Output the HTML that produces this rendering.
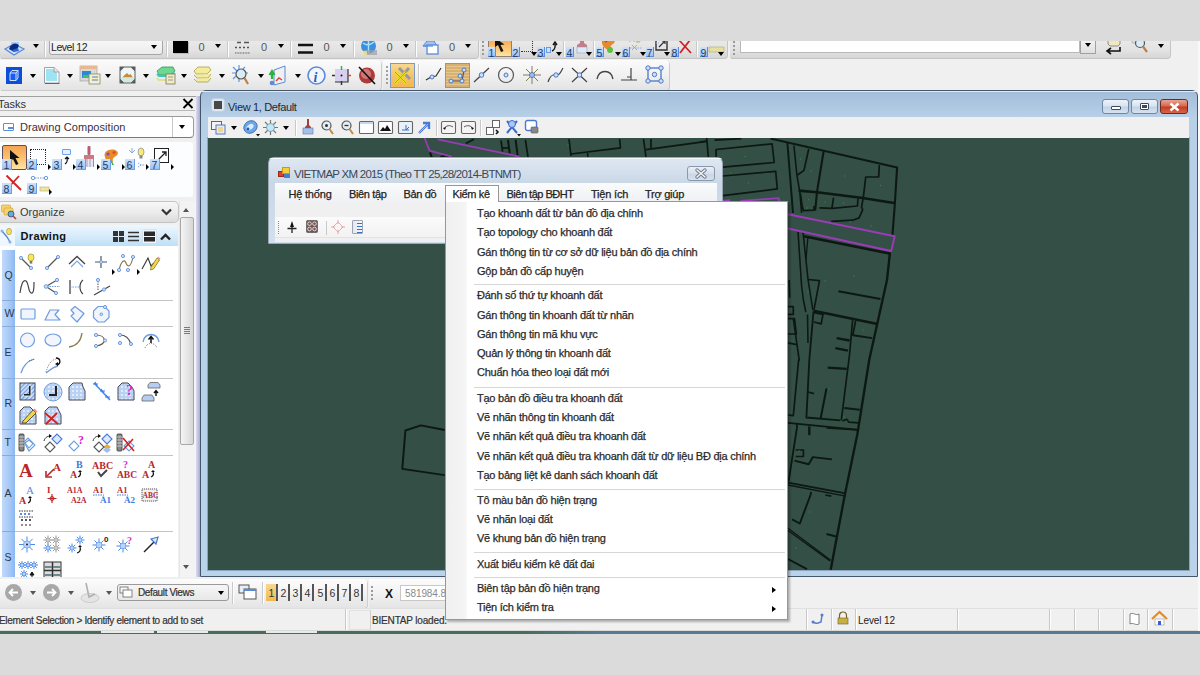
<!DOCTYPE html>
<html><head><meta charset="utf-8">
<style>
*{box-sizing:border-box}
html,body{margin:0;padding:0}
body{width:1200px;height:675px;position:relative;overflow:hidden;background:#dbdbdb;font-family:"Liberation Sans",sans-serif;font-size:11px;color:#000}
.a{position:absolute}
.t{position:absolute;white-space:nowrap;line-height:1}
svg{position:absolute;overflow:visible}
.arr{position:absolute;width:0;height:0;border-left:3.5px solid transparent;border-right:3.5px solid transparent;border-top:4px solid #000}
.sep{position:absolute;width:2px;border-left:1px solid #c9c9c9;border-right:1px solid #fff}
</style></head>
<body>
<!-- frame -->
<div class="a" style="left:0;top:40px;width:1200px;height:592px;background:#f0f0f0"></div>
<div class="a" style="left:0;top:631px;width:1200px;height:2px;background:#4d6b66"></div>

<!-- toolbar1 -->
<div class="a" style="left:0;top:40px;width:1200px;height:52px;background:#f0f0f0"></div>
<div class="a" style="left:0px;top:40px;width:478px;height:18px;background:linear-gradient(#e9e9e9,#e2e2e2 60%,#d6d6d6);border-radius:0 0 4px 0;box-shadow:1px 1px 0 #c4c4c4"></div>
<div class="a" style="left:480px;top:40px;width:247px;height:18px;background:linear-gradient(#e9e9e9,#e2e2e2 60%,#d6d6d6);border-radius:0 0 4px 0;box-shadow:1px 1px 0 #c4c4c4"></div>
<div class="a" style="left:730px;top:40px;width:440px;height:18px;background:linear-gradient(#e9e9e9,#e2e2e2 60%,#d6d6d6);border-radius:0 0 4px 0;box-shadow:1px 1px 0 #c4c4c4"></div>
<svg style="left:3px;top:40px" width="24" height="16"><path d="M2 9 L11 4 L21 9 L11 15Z" fill="#cfe0fa" stroke="#5a8ad8" stroke-width="1.2"/><path d="M8 2 L8 8 L16 8 L16 2" fill="#a8d0f8"/><path d="M6 9 C8 3 14 2 16 6 L14 9 L11 12Z" fill="#0b2a80"/><path d="M9 10 L15 8 L16 11 L11 12Z" fill="#2a68d8"/></svg>
<div class="arr" style="left:33px;top:44px;border-top-color:#000"></div>
<div class="sep" style="left:44px;top:41px;height:16px"></div>
<div class="a" style="left:49px;top:38px;width:114px;height:17px;border:1px solid #a5a5a5;border-radius:0 0 3px 3px;background:linear-gradient(#f8f8f8,#ececec)"></div>
<div class="t" style="left:51px;top:42px;font-size:10.5px;color:#222;letter-spacing:-0.45px">Level 12</div>
<div class="arr" style="left:151px;top:45px;border-top-color:#000"></div>
<div class="sep" style="left:166px;top:41px;height:16px"></div>
<div class="a" style="left:173px;top:41px;width:15px;height:12px;background:#000;box-shadow:1px 1px 0 #bbb"></div>
<div class="t" style="left:198.5px;top:41.5px;font-size:11px;color:#555">0</div>
<div class="arr" style="left:215px;top:44px;border-top-color:#000"></div>
<div class="sep" style="left:227px;top:41px;height:16px"></div>
<svg style="left:234px;top:40px" width="17" height="16"><path d="M3 2.5 H7 M10 2.5 H15 M1 7.5 H3 M5 7.5 H7 M9 7.5 H11 M13 7.5 H15" stroke="#555" stroke-width="1.5"/><path d="M1 13 H16" stroke="#888" stroke-width="1.6" stroke-dasharray="1 0.6"/></svg>
<div class="t" style="left:261px;top:41.5px;font-size:11px;color:#555">0</div>
<div class="arr" style="left:278px;top:44px;border-top-color:#000"></div>
<div class="sep" style="left:290px;top:41px;height:16px"></div>
<svg style="left:297px;top:40px" width="17" height="16"><path d="M1 5 H16 M1 12.5 H16" stroke="#111" stroke-width="2.6"/></svg>
<div class="t" style="left:323.5px;top:41.5px;font-size:11px;color:#555">0</div>
<div class="arr" style="left:340px;top:44px;border-top-color:#000"></div>
<div class="sep" style="left:353px;top:41px;height:16px"></div>
<svg style="left:360px;top:39px" width="18" height="17"><circle cx="8.5" cy="7" r="7.5" fill="#3a90e0"/><path d="M3 4 Q8 8 14 3 M8.5 0 V14" stroke="#a8e0f8" stroke-width="1.5" fill="none"/><rect x="4" y="11" width="13" height="5" fill="#9aa0a8" opacity="0.7"/><rect x="1" y="12" width="6" height="4" fill="#e8e8a0" opacity="0.8"/></svg>
<div class="t" style="left:386.5px;top:41.5px;font-size:11px;color:#555">0</div>
<div class="arr" style="left:403px;top:44px;border-top-color:#000"></div>
<div class="sep" style="left:415px;top:41px;height:16px"></div>
<svg style="left:421px;top:39px" width="19" height="17"><path d="M2 7 L6 2 L13 2 L16 7Z" fill="#9cc4f4" stroke="#5a8ad8"/><rect x="6" y="6" width="11" height="9" fill="#fff" stroke="#5a8ad8" stroke-width="1.3"/><path d="M2 7 H12" stroke="#5a8ad8" stroke-width="1.2"/></svg>
<div class="t" style="left:449px;top:41.5px;font-size:11px;color:#555">0</div>
<div class="arr" style="left:465px;top:44px;border-top-color:#000"></div>
<div class="a" style="left:482px;top:41px;width:2px;height:14px;border-left:2px dotted #9a9a9a"></div>
<div class="a" style="left:488px;top:38px;width:24px;height:19px;background:linear-gradient(#f5a44e,#fbc878 60%,#fde3a6);border:1px solid #8c8070;border-top:none"></div>
<svg style="left:494px;top:38px" width="12" height="17"><path d="M1 0 L1 9 L4 7 L7 14 L9.5 13 L6.5 7 L10.5 6.5Z" fill="#111"/></svg>
<div class="a" style="left:488px;top:47px;width:8px;height:10px;background:linear-gradient(#cfe2fb,#9cc2f2);border-right:1px solid #5b8ee0;border-bottom:1px solid #5b8ee0"></div>
<div class="t" style="left:488.5px;top:47.5px;font-size:10.5px;color:#1f3c66">1</div>
<div class="a" style="left:512px;top:47px;width:8px;height:10px;background:linear-gradient(#cfe2fb,#9cc2f2);border-right:1px solid #5b8ee0;border-bottom:1px solid #5b8ee0"></div>
<div class="t" style="left:512.5px;top:47.5px;font-size:10.5px;color:#1f3c66">2</div>
<div class="a" style="left:521px;top:38px;width:12px;height:14px;border-right:1.5px dotted #333;border-bottom:1.5px dotted #333"></div>
<div class="arr" style="left:531px;top:52px;border-top-color:#000"></div>
<div class="a" style="left:537px;top:47px;width:8px;height:10px;background:linear-gradient(#cfe2fb,#9cc2f2);border-right:1px solid #5b8ee0;border-bottom:1px solid #5b8ee0"></div>
<div class="t" style="left:537.5px;top:47.5px;font-size:10.5px;color:#1f3c66">3</div>
<div class="a" style="left:546px;top:47px;width:5px;height:6px;background:#cfe0fa;border:1px solid #6a9ae0"></div>
<svg style="left:550px;top:38px" width="10" height="16"><path d="M2 13 Q6 11 5 6 M3 7 L5 4 L7 7" stroke="#111" stroke-width="1.4" fill="none"/><path d="M1 1 H10" stroke="#6a9ae0" stroke-width="2"/></svg>
<div class="arr" style="left:556px;top:52px;border-top-color:#000"></div>
<div class="sep" style="left:563px;top:41px;height:16px"></div>
<div class="a" style="left:566px;top:47px;width:8px;height:10px;background:linear-gradient(#cfe2fb,#9cc2f2);border-right:1px solid #5b8ee0;border-bottom:1px solid #5b8ee0"></div>
<div class="t" style="left:566.5px;top:47.5px;font-size:10.5px;color:#1f3c66">4</div>
<svg style="left:574px;top:38px" width="16" height="17"><path d="M6 0 H10 V5 L13 7 V12 H3 V7 L6 5Z" fill="#c87a86"/><rect x="3" y="9" width="10" height="6" fill="#dde8f8" stroke="#90a0c0" stroke-width="0.6"/></svg>
<div class="arr" style="left:586px;top:52px;border-top-color:#000"></div>
<div class="sep" style="left:593px;top:41px;height:16px"></div>
<div class="a" style="left:596px;top:47px;width:8px;height:10px;background:linear-gradient(#cfe2fb,#9cc2f2);border-right:1px solid #5b8ee0;border-bottom:1px solid #5b8ee0"></div>
<div class="t" style="left:596.5px;top:47.5px;font-size:10.5px;color:#1f3c66">5</div>
<svg style="left:601px;top:38px" width="16" height="17"><path d="M1 5 C0 2 4 0 9 0.5 C14 1 15 4 12 6 C10 7 9 8 10 11 C7 13 2 10 1 5Z" fill="#e68a2a"/><circle cx="5" cy="3" r="1.4" fill="#7d4ac8"/><circle cx="9" cy="12" r="3" fill="#5cc040"/></svg>
<div class="arr" style="left:615px;top:52px;border-top-color:#000"></div>
<div class="a" style="left:622px;top:47px;width:8px;height:10px;background:linear-gradient(#cfe2fb,#9cc2f2);border-right:1px solid #5b8ee0;border-bottom:1px solid #5b8ee0"></div>
<div class="t" style="left:622.5px;top:47.5px;font-size:10.5px;color:#1f3c66">6</div>
<svg style="left:628px;top:38px" width="16" height="17"><path d="M2 0 V4 M6 0 V4" stroke="#8ab0e8"/><ellipse cx="10" cy="2" rx="2.5" ry="3" fill="#c8c090"/><path d="M2 10 H14" stroke="#8ab0e8" stroke-dasharray="1.5 1"/><path d="M4 7 L9 12 M9 7 L4 12" stroke="#8ab0e8"/></svg>
<div class="arr" style="left:640px;top:52px;border-top-color:#000"></div>
<div class="a" style="left:646px;top:47px;width:8px;height:10px;background:linear-gradient(#cfe2fb,#9cc2f2);border-right:1px solid #5b8ee0;border-bottom:1px solid #5b8ee0"></div>
<div class="t" style="left:646.5px;top:47.5px;font-size:10.5px;color:#1f3c66">7</div>
<svg style="left:654px;top:38px" width="14" height="17"><path d="M2 1 V12 H13 V1" stroke="#333" stroke-width="1.4" fill="none"/><path d="M5 9 L11 3 M8 3 H11 V6" stroke="#333" stroke-width="1.2" fill="none"/><path d="M2 5 H6" stroke="#8ab0e8" stroke-dasharray="1 1"/></svg>
<div class="arr" style="left:664px;top:52px;border-top-color:#000"></div>
<div class="a" style="left:671px;top:47px;width:8px;height:10px;background:linear-gradient(#cfe2fb,#9cc2f2);border-right:1px solid #5b8ee0;border-bottom:1px solid #5b8ee0"></div>
<div class="t" style="left:671.5px;top:47.5px;font-size:10.5px;color:#1f3c66">8</div>
<svg style="left:677px;top:39px" width="16" height="16"><path d="M2 1 L14 14 M13 1 L3 14" stroke="#d42020" stroke-width="1.8"/></svg>
<div class="sep" style="left:696px;top:41px;height:16px"></div>
<div class="a" style="left:700px;top:47px;width:8px;height:10px;background:linear-gradient(#cfe2fb,#9cc2f2);border-right:1px solid #5b8ee0;border-bottom:1px solid #5b8ee0"></div>
<div class="t" style="left:700.5px;top:47.5px;font-size:10.5px;color:#1f3c66">9</div>
<svg style="left:708px;top:38px" width="18" height="17"><rect x="1" y="9" width="15" height="5" fill="#e6e0a0" stroke="#b0a870" stroke-width="0.6"/><path d="M3 1 H13" stroke="#8ab0e8" stroke-width="2"/></svg>
<div class="arr" style="left:718px;top:52px;border-top-color:#000"></div>
<div class="a" style="left:733px;top:41px;width:2px;height:14px;border-left:2px dotted #9a9a9a"></div>
<div class="a" style="left:740px;top:38px;width:340px;height:15px;background:#fff;border:1px solid #b8b8b8;border-top:none"></div>
<div class="a" style="left:1080px;top:38px;width:16px;height:16px;background:linear-gradient(#f6f6f6,#e0e0e0);border:1px solid #a0a0a0;border-top:none"></div>
<div class="arr" style="left:1085px;top:43px;border-top-color:#000"></div>
<svg style="left:1104px;top:38px" width="20" height="18"><path d="M4 0 H16 V6 L14 8 H6 L4 6Z" fill="#efe8c0" stroke="#777" stroke-width="0.8"/><path d="M16 9 V13 H4 M7 10 L3 13 L7 16" stroke="#111" stroke-width="1.6" fill="none"/></svg>
<svg style="left:1132px;top:38px" width="18" height="18"><rect x="0" y="1" width="6" height="4" fill="#ddd" stroke="#999" stroke-width="0.5"/><circle cx="8" cy="5" r="4.5" fill="#d8ecf8" stroke="#555" stroke-width="1.2"/><path d="M11 8.5 L15 14" stroke="#c08040" stroke-width="2.2"/></svg>
<div class="arr" style="left:1158px;top:44px;border-top-color:#000"></div>
<div class="a" style="left:0px;top:60px;width:381px;height:30px;background:linear-gradient(#fbfbfb,#f1f1f1 50%,#e3e3e3);border-radius:0 4px 4px 0;box-shadow:1px 1px 0 #cacaca"></div>
<div class="a" style="left:383px;top:60px;width:286px;height:30px;background:linear-gradient(#fbfbfb,#f1f1f1 50%,#e3e3e3);border-radius:0 4px 4px 0;box-shadow:1px 1px 0 #cacaca"></div>
<svg style="left:6px;top:67px" width="16" height="17"><rect x="0" y="0" width="16" height="17" fill="#0b4fd8"/><path d="M4 6 L6 3.5 H12 V11 L10 13.5 H4Z M4 6 H10 V13.5 M10 6 L12 3.5" stroke="#cfe0ff" stroke-width="1" fill="#1a5cf0"/></svg>
<div class="arr" style="left:30px;top:74px;border-top-color:#000"></div>
<svg style="left:43px;top:66px" width="18" height="19"><path d="M1.5 1.5 H11 L16 6 V17 H1.5Z" fill="#fff" stroke="#999" stroke-width="0.9"/><path d="M3 3 H10 L14 7 V15 H3Z" fill="#9ce4f4"/><path d="M11 1.5 V6 H16" fill="#e8e8e8" stroke="#999" stroke-width="0.9"/><path d="M2 17.5 H16.5" stroke="#666"/></svg>
<div class="arr" style="left:67px;top:74px;border-top-color:#000"></div>
<svg style="left:80px;top:66px" width="21" height="19"><rect x="0" y="0" width="17" height="15" fill="#d8d8d8" stroke="#999" stroke-width="0.6"/><rect x="0" y="0" width="17" height="3" fill="#e8b890"/><rect x="2" y="5" width="9" height="7" fill="#2a88d8"/><rect x="3" y="9" width="7" height="3" fill="#40c060"/><rect x="9" y="8" width="11" height="10" fill="#f4f0c8" stroke="#887" stroke-width="0.8"/><path d="M12 11 H18 M12 14 H18" stroke="#4a7ad8" stroke-width="1.2"/></svg>
<div class="arr" style="left:105px;top:74px;border-top-color:#000"></div>
<svg style="left:119px;top:66px" width="17" height="18"><rect x="0.5" y="0.5" width="16" height="17" fill="#5a5a5a"/><path d="M5 1.5 H12 L15.5 5 V13 L12 16.5 H5 L1.5 13 V5Z" fill="#eef6f8"/><path d="M3 11.5 L8 7 L10 9 L11.5 8 L14 11.5Z" fill="#c88a3a"/><path d="M2 11.5 H15 V13 L12 16 H5 L2 13Z" fill="#d0ecd8"/></svg>
<div class="arr" style="left:143px;top:74px;border-top-color:#000"></div>
<svg style="left:156px;top:66px" width="20" height="19"><path d="M1 5 L6 1 H17 L19 5 L14 9 H3Z" fill="#6cd890" stroke="#3a9060" stroke-width="0.8"/><path d="M1 8 L3 10 H14 L19 7" fill="none" stroke="#3ac8c0" stroke-width="2"/><path d="M1 12 L3 14 H12" fill="none" stroke="#e0e090" stroke-width="2"/><rect x="10" y="8" width="9" height="10" fill="#f0ecc0" stroke="#776" stroke-width="0.8"/><path d="M12 11 H17 M12 14 H17" stroke="#999" stroke-width="1"/></svg>
<div class="arr" style="left:181px;top:74px;border-top-color:#000"></div>
<svg style="left:193px;top:66px" width="19" height="19"><path d="M1 5 L5 1 H16 L18 4 L14 8 H3Z" fill="#f4ec98" stroke="#a8a050" stroke-width="0.8"/><path d="M1 9 L4 12 H15 L18 8" fill="#f4ec98" stroke="#a8a050" stroke-width="0.8"/><path d="M1 13 L4 16 H15 L18 12" fill="#f4ec98" stroke="#a8a050" stroke-width="0.8"/></svg>
<div class="arr" style="left:219px;top:74px;border-top-color:#000"></div>
<svg style="left:231px;top:65px" width="20" height="21"><path d="M1 8 H17 M8 0 V17 M2 2 L14 14 M14 2 L2 14" stroke="#5a98e8" stroke-width="1.2"/><circle cx="10" cy="9" r="5" fill="#d8ecf8" stroke="#555" stroke-width="1.2"/><path d="M13.5 13 L17 19" stroke="#c08040" stroke-width="2.2"/></svg>
<div class="arr" style="left:258px;top:74px;border-top-color:#000"></div>
<svg style="left:269px;top:65px" width="18" height="21"><path d="M5 5 L16 1 V17 L5 20Z" fill="#f0f0f0" stroke="#5a8ad8" stroke-width="1"/><path d="M3 14 V8 M0.5 10 L3 6 L5.5 10" stroke="#30b040" stroke-width="2.2" fill="none"/><path d="M7 16 L10 13 L13 15" stroke="#e04040" stroke-width="1.5" fill="none"/><circle cx="3" cy="18" r="2.3" fill="#5a8ad8"/></svg>
<div class="arr" style="left:295px;top:74px;border-top-color:#000"></div>
<svg style="left:307px;top:66px" width="19" height="19"><circle cx="9.5" cy="9.5" r="8.5" fill="#f2f6fc" stroke="#5a8ad8" stroke-width="1.6"/><text x="6.5" y="15.5" font-family="Liberation Serif" font-style="italic" font-weight="bold" font-size="14" fill="#2a5ad0">i</text></svg>
<svg style="left:332px;top:66px" width="19" height="20"><rect x="3" y="3" width="13" height="13" fill="#d8d0f0"/><path d="M16 3 V16 H3" stroke="#333" stroke-width="1.2" fill="none"/><path d="M9.5 0 V4" stroke="#40b040" stroke-width="1.5"/><path d="M15 9.5 H19" stroke="#e04040" stroke-width="1.5"/><path d="M0 9.5 H3 M9.5 15 V19" stroke="#333" stroke-width="1.5"/><circle cx="9.5" cy="9.5" r="1" fill="#111"/></svg>
<svg style="left:358px;top:66px" width="18" height="19"><circle cx="9" cy="9.5" r="8" fill="#b03a3a"/><circle cx="8" cy="8" r="5" fill="#e8a0a0" opacity="0.6"/><path d="M1 1 L17 18" stroke="#111" stroke-width="1.6"/></svg>
<div class="a" style="left:386px;top:66px;width:2px;height:18px;border-left:2px dotted #a0a0a0"></div>
<div class="a" style="left:390px;top:63px;width:25px;height:25px;border:1px solid #7a9ac8;background:linear-gradient(#f7d890,#f5c060 60%,#f3b850)"></div>
<svg style="left:393px;top:66px" width="20" height="19"><path d="M6 2 L17 13 M16 2 L6 13" stroke="#999" stroke-width="3"/><path d="M2 6 L13 17 M13 6 L2 17" stroke="#e8e020" stroke-width="3"/><path d="M2 6 L13 17 M13 6 L2 17" stroke="#908010" stroke-width="0.6" fill="none"/></svg>
<div class="sep" style="left:418px;top:64px;height:22px"></div>
<svg style="left:425px;top:66px" width="18" height="18"><path d="M1 14 L6 11 L11 10 L16 2" stroke="#333" stroke-width="1.2" fill="none"/><circle cx="7" cy="11" r="2" fill="#cfe0fa" stroke="#4a78c8"/></svg>
<div class="a" style="left:445px;top:63px;width:25px;height:25px;border:1px solid #7a9ac8;background:repeating-linear-gradient(0deg,#d8b070 0 2px,#e4c890 2px 3px),#d8b070"></div>
<svg style="left:447px;top:65px" width="22" height="22"><path d="M4 16 H15 L17 5" stroke="#555" stroke-width="1.2" fill="none"/><circle cx="4" cy="16" r="2" fill="#cfe0fa" stroke="#4a78c8"/><circle cx="15" cy="16" r="2" fill="#cfe0fa" stroke="#4a78c8"/><circle cx="17" cy="5" r="2" fill="#cfe0fa" stroke="#4a78c8"/><circle cx="13" cy="11" r="2" fill="#cfe0fa" stroke="#4a78c8"/></svg>
<svg style="left:473px;top:66px" width="18" height="18"><path d="M1 16 L16 2" stroke="#444" stroke-width="1.2"/><circle cx="8.5" cy="9" r="2.3" fill="#cfe0fa" stroke="#4a78c8"/></svg>
<svg style="left:497px;top:66px" width="18" height="18"><circle cx="9" cy="9" r="7.5" fill="none" stroke="#555" stroke-width="1.2"/><circle cx="9" cy="9" r="2" fill="#cfe0fa" stroke="#4a78c8"/></svg>
<svg style="left:522px;top:65px" width="20" height="20"><path d="M10 1 V19 M1 10 H19 M4 4 L16 16 M16 4 L4 16" stroke="#8a7a50" stroke-width="1"/><circle cx="10" cy="10" r="2.5" fill="#9cc0f0" stroke="#4a78c8"/></svg>
<svg style="left:547px;top:66px" width="18" height="18"><path d="M1 16 C3 10 5 8 9 9 C13 10 14 5 16 2" stroke="#444" stroke-width="1.2" fill="none"/><circle cx="9" cy="9" r="2.2" fill="#cfe0fa" stroke="#4a78c8"/></svg>
<svg style="left:571px;top:66px" width="18" height="18"><path d="M1 2 L16 16 M16 2 L1 16" stroke="#444" stroke-width="1.2"/><circle cx="8.5" cy="9" r="2.2" fill="#cfe0fa" stroke="#4a78c8"/></svg>
<svg style="left:596px;top:67px" width="18" height="16"><path d="M1 12 C3 2 15 2 17 12" stroke="#444" stroke-width="1.3" fill="none"/></svg>
<svg style="left:620px;top:66px" width="18" height="18"><path d="M1 14 H17 M11 2 V14 M11 11 H7" stroke="#444" stroke-width="1.2" fill="none"/></svg>
<svg style="left:645px;top:65px" width="19" height="20"><rect x="3" y="3" width="13" height="13" fill="none" stroke="#4a78c8" stroke-width="1.3"/><circle cx="3" cy="3" r="2.2" fill="#cfe0fa" stroke="#4a78c8"/><circle cx="16" cy="3" r="2.2" fill="#cfe0fa" stroke="#4a78c8"/><circle cx="3" cy="16" r="2.2" fill="#cfe0fa" stroke="#4a78c8"/><circle cx="16" cy="16" r="2.2" fill="#cfe0fa" stroke="#4a78c8"/><circle cx="9.5" cy="9.5" r="2.2" fill="#cfe0fa" stroke="#4a78c8"/></svg>
<div class="a" style="left:0;top:0;width:1200px;height:41px;background:#dbdbdb"></div>
<!-- toolbar2 -->

<!-- tasks -->
<div class="a" style="left:0;top:96px;width:197px;height:481px;background:#f0f0f0"></div>
<div class="a" style="left:0;top:96px;width:197px;height:1px;background:#a0a0a0"></div>
<div class="a" style="left:196px;top:96px;width:4px;height:481px;background:linear-gradient(90deg,#dcdcf0,#a9a9d6)"></div>
<div class="a" style="left:0;top:97px;width:195px;height:14px;background:#efefef;border-bottom:1px solid #b9b9b9"></div>
<div class="t" style="left:-2px;top:99px;font-size:11px;color:#333">Tasks</div>
<svg style="left:182px;top:98px" width="12" height="11"><path d="M1.5 1 L10.5 10 M10.5 1 L1.5 10" stroke="#000" stroke-width="1.8"/></svg>
<div class="a" style="left:-4px;top:116px;width:198px;height:22px;background:#fff;border:1px solid #9b9b9b;border-radius:4px;border-bottom-color:#7a7a7a"></div>
<div class="a" style="left:172px;top:117px;width:1px;height:20px;background:#c8c8c8"></div>
<div class="arr" style="left:179px;top:125px"></div>
<div class="a" style="left:3px;top:123px;width:11px;height:8px;border:1.5px solid #5a8ed8;border-radius:1px;background:#fff"><div class="a" style="left:4px;top:3px;width:5px;height:2px;background:#5a8ed8"></div></div>
<div class="t" style="left:20px;top:122px;font-size:11px;color:#3a3040;letter-spacing:0.05px">Drawing Composition</div>
<div class="a" style="left:0;top:142px;width:193px;height:55px;background:#fcfdff;border-radius:0 3px 3px 0"></div>
<div class="a" style="left:2px;top:145px;width:25px;height:25px;border:1px solid #5c5060;border-radius:2px;background:linear-gradient(#f5a44e,#fbc878 60%,#fde3a6)"></div>
<svg style="left:9px;top:149px" width="12" height="18"><path d="M1 1 L1 13 L4 10 L7 16 L9.5 15 L6.5 9 L10.5 9 Z" fill="#111"/></svg>
<div class="a" style="left:2px;top:159px;width:10px;height:11px;background:linear-gradient(#cfe2fb,#9cc2f2);border-right:1px solid #6d9ee6;border-bottom:1px solid #6d9ee6"></div><div class="t" style="left:3.5px;top:160px;font-size:10.5px;color:#1f3c66;font-weight:normal">1</div>
<div class="a" style="left:30px;top:149px;width:16px;height:16px;border:1.5px dotted #222"></div>
<div class="a" style="left:27px;top:159px;width:10px;height:11px;background:linear-gradient(#cfe2fb,#9cc2f2);border-right:1px solid #6d9ee6;border-bottom:1px solid #6d9ee6"></div><div class="t" style="left:28.5px;top:160px;font-size:10.5px;color:#1f3c66;font-weight:normal">2</div>
<div class="a" style="left:48px;top:164px;width:0;height:0;border-top:3px solid transparent;border-bottom:3px solid transparent;border-left:3px solid #000"></div>
<div class="a" style="left:62px;top:149px;width:9px;height:6px;border:1.5px solid #6aa0e8;border-radius:1px;background:#e6f0fc"></div>
<svg style="left:63px;top:156px" width="8" height="9"><path d="M2 8 Q5 6 4 2 M2 3 L4 1 L6 3" stroke="#111" stroke-width="1.2" fill="none"/></svg>
<div class="a" style="left:52px;top:159px;width:10px;height:11px;background:linear-gradient(#cfe2fb,#9cc2f2);border-right:1px solid #6d9ee6;border-bottom:1px solid #6d9ee6"></div><div class="t" style="left:53.5px;top:160px;font-size:10.5px;color:#1f3c66;font-weight:normal">3</div>
<div class="a" style="left:73px;top:164px;width:0;height:0;border-top:3px solid transparent;border-bottom:3px solid transparent;border-left:3px solid #000"></div>
<svg style="left:82px;top:146px" width="14" height="22"><rect x="5.5" y="0" width="3" height="9" rx="1" fill="#b86070"/><path d="M2 9 H12 L12 21 H2 Z" fill="#c87a86"/><path d="M3 13 H11 V21 H3Z" fill="#e6e6f0"/><path d="M5 13 V21 M8 13 V21" stroke="#9090b0" stroke-width="0.8"/></svg>
<div class="a" style="left:76px;top:159px;width:10px;height:11px;background:linear-gradient(#cfe2fb,#9cc2f2);border-right:1px solid #6d9ee6;border-bottom:1px solid #6d9ee6"></div><div class="t" style="left:77.5px;top:160px;font-size:10.5px;color:#1f3c66;font-weight:normal">4</div>
<div class="a" style="left:97px;top:164px;width:0;height:0;border-top:3px solid transparent;border-bottom:3px solid transparent;border-left:3px solid #000"></div>
<svg style="left:102px;top:148px" width="18" height="18"><path d="M3 9 C1 4 6 1 11 1.5 C16 2 17.5 6 14 8 C11 9.5 10 11 11 14 C8 17 4 14 3 9Z" fill="#e68a2a"/><circle cx="6" cy="6" r="1.6" fill="#7d4ac8"/><circle cx="12" cy="4.5" r="1.6" fill="#e64a2a"/><path d="M9 12 L12 17 L10 17Z" fill="#3cb03c"/></svg>
<div class="a" style="left:101px;top:159px;width:10px;height:11px;background:linear-gradient(#cfe2fb,#9cc2f2);border-right:1px solid #6d9ee6;border-bottom:1px solid #6d9ee6"></div><div class="t" style="left:102.5px;top:160px;font-size:10.5px;color:#1f3c66;font-weight:normal">5</div>
<div class="a" style="left:122px;top:164px;width:0;height:0;border-top:3px solid transparent;border-bottom:3px solid transparent;border-left:3px solid #000"></div>
<svg style="left:127px;top:146px" width="20" height="24"><path d="M5 2 V7 M2 4 L5 7 L8 4" stroke="#7aa0e0" stroke-width="0.9" fill="none"/><ellipse cx="14" cy="6" rx="3" ry="4" fill="#f4ea80" stroke="#888" stroke-width="0.7"/><rect x="12.5" y="9.5" width="3" height="3" fill="#888"/><path d="M11 17 L14 19 M11 21 L14 19 L18 19" stroke="#7aa0e0" stroke-width="1" stroke-dasharray="1.5 1" fill="none"/></svg>
<div class="a" style="left:125px;top:159px;width:10px;height:11px;background:linear-gradient(#cfe2fb,#9cc2f2);border-right:1px solid #6d9ee6;border-bottom:1px solid #6d9ee6"></div><div class="t" style="left:126.5px;top:160px;font-size:10.5px;color:#1f3c66;font-weight:normal">6</div>
<div class="a" style="left:146px;top:164px;width:0;height:0;border-top:3px solid transparent;border-bottom:3px solid transparent;border-left:3px solid #000"></div>
<div class="a" style="left:154px;top:148px;width:15px;height:15px;border:1.5px solid #222;background:#fff"></div>
<svg style="left:156px;top:149px" width="13" height="13"><path d="M2 11 L10 3 M6 3 H10 V7" stroke="#222" stroke-width="1.3" fill="none"/></svg>
<div class="a" style="left:150px;top:159px;width:10px;height:11px;background:linear-gradient(#cfe2fb,#9cc2f2);border-right:1px solid #6d9ee6;border-bottom:1px solid #6d9ee6"></div><div class="t" style="left:151.5px;top:160px;font-size:10.5px;color:#1f3c66;font-weight:normal">7</div>
<div class="a" style="left:171px;top:164px;width:0;height:0;border-top:3px solid transparent;border-bottom:3px solid transparent;border-left:3px solid #000"></div>
<svg style="left:5px;top:174px" width="18" height="18"><path d="M1.5 1.5 L16 16 M14 2 L2 15" stroke="#d42020" stroke-width="1.8"/></svg>
<div class="a" style="left:2px;top:183px;width:10px;height:11px;background:linear-gradient(#cfe2fb,#9cc2f2);border-right:1px solid #6d9ee6;border-bottom:1px solid #6d9ee6"></div><div class="t" style="left:3.5px;top:184px;font-size:10.5px;color:#1f3c66;font-weight:normal">8</div>
<svg style="left:30px;top:175px" width="20" height="18"><circle cx="3" cy="3" r="1.7" fill="none" stroke="#6a9ae0"/><circle cx="16" cy="3" r="1.7" fill="none" stroke="#6a9ae0"/><path d="M5 3 H14" stroke="#6a9ae0" stroke-dasharray="1.5 1"/><rect x="10" y="12" width="9" height="4" fill="#ece6a0" stroke="#b8b070" stroke-width="0.6"/></svg>
<div class="a" style="left:27px;top:183px;width:10px;height:11px;background:linear-gradient(#cfe2fb,#9cc2f2);border-right:1px solid #6d9ee6;border-bottom:1px solid #6d9ee6"></div><div class="t" style="left:28.5px;top:184px;font-size:10.5px;color:#1f3c66;font-weight:normal">9</div>
<div class="a" style="left:49px;top:189px;width:0;height:0;border-top:3px solid transparent;border-bottom:3px solid transparent;border-left:3px solid #000"></div>
<div class="a" style="left:-4px;top:201px;width:183px;height:22px;border:1px solid #c4c4c4;border-radius:5px;background:linear-gradient(#f7f7f7,#ececec 50%,#dcdcdc)"></div>
<svg style="left:1px;top:204px" width="16" height="16"><rect x="0.5" y="1" width="9" height="7" rx="1" fill="#f5d36a" stroke="#caa030" stroke-width="0.6"/><rect x="3" y="4" width="9" height="7" rx="1" fill="#f5d36a" stroke="#caa030" stroke-width="0.6"/><circle cx="10" cy="10" r="3" fill="#5ab0d8" stroke="#447" stroke-width="0.8"/><path d="M12 12 L15 15" stroke="#c04040" stroke-width="1.6"/></svg>
<div class="t" style="left:20px;top:207px;font-size:11px;color:#3a3a3a">Organize</div>
<svg style="left:161px;top:208px" width="11" height="8"><path d="M1 1.5 L5.5 6 L10 1.5" stroke="#333" stroke-width="2.2" fill="none"/></svg>
<div class="a" style="left:179px;top:201px;width:17px;height:376px;background:#f3f3f3;border-left:1px solid #e6e6e6"></div>
<div class="a" style="left:183px;top:208px;width:0;height:0;border-left:3.5px solid transparent;border-right:3.5px solid transparent;border-bottom:4px solid #555"></div>
<div class="a" style="left:180px;top:217px;width:14px;height:228px;border:1px solid #a8a8a8;border-radius:2px;background:linear-gradient(90deg,#f4f4f4,#e6e6e6 50%,#d6d6d6)"></div>
<div class="a" style="left:184px;top:327px;width:6px;height:1px;background:#7a7a7a;box-shadow:0 2px 0 #7a7a7a,0 4px 0 #7a7a7a,0 6px 0 #7a7a7a"></div>
<div class="a" style="left:183px;top:565px;width:0;height:0;border-left:3.5px solid transparent;border-right:3.5px solid transparent;border-top:4px solid #555"></div>
<div class="a" style="left:0;top:225px;width:178px;height:21px;background:linear-gradient(#eef7fd,#d8ecfa 50%,#bde0f7)"></div>
<div class="a" style="left:0;top:225px;width:15px;height:21px;background:#eef7fd"></div>
<svg style="left:0px;top:228px" width="14" height="16"><path d="M2 3 L7 9 L10 14" stroke="#5a8ad8" stroke-width="1.4" fill="none"/><circle cx="2" cy="3" r="1.5" fill="#8ab0e8"/><circle cx="10" cy="14" r="1.5" fill="#8ab0e8"/><ellipse cx="9" cy="3.5" rx="2.5" ry="3.2" fill="#f4e060" stroke="#a09030" stroke-width="0.6"/></svg>
<div class="t" style="left:20.5px;top:231px;font-size:11px;font-weight:bold;color:#111;letter-spacing:0.35px">Drawing</div>
<svg style="left:112px;top:230px" width="62" height="14"><rect x="1" y="1" width="5" height="5" fill="#333"/><rect x="7" y="1" width="5" height="5" fill="#333"/><rect x="1" y="7" width="5" height="5" fill="#333"/><rect x="7" y="7" width="5" height="5" fill="#333"/><path d="M16 2.5 H27 M16 6.5 H27 M16 10.5 H27" stroke="#333" stroke-width="1.6"/><rect x="30.5" y="-0.5" width="14" height="14" rx="1" fill="#eef6fb" stroke="#c8d8e4" stroke-width="0.6"/><rect x="32" y="1.5" width="11" height="4.5" fill="#2a2a2a"/><rect x="32" y="7" width="11" height="4.5" fill="#2a2a2a"/><path d="M49 9.5 L53.5 5 L58 9.5" stroke="#222" stroke-width="2.4" fill="none"/></svg>
<div class="a" style="left:0;top:246px;width:178px;height:331px;background:#fff"></div>
<div class="a" style="left:2px;top:250px;width:13px;height:327px;background:linear-gradient(90deg,#c0d9fb,#a6c8f6 60%,#8ab8f2)"></div>
<div class="a" style="left:15px;top:300px;width:158px;height:1px;background:#c4c4c4"></div>
<div class="a" style="left:2px;top:300px;width:13px;height:1px;background:#86acdc"></div>
<div class="a" style="left:15px;top:326px;width:158px;height:1px;background:#c4c4c4"></div>
<div class="a" style="left:2px;top:326px;width:13px;height:1px;background:#86acdc"></div>
<div class="a" style="left:15px;top:378px;width:158px;height:1px;background:#c4c4c4"></div>
<div class="a" style="left:2px;top:378px;width:13px;height:1px;background:#86acdc"></div>
<div class="a" style="left:15px;top:429px;width:158px;height:1px;background:#c4c4c4"></div>
<div class="a" style="left:2px;top:429px;width:13px;height:1px;background:#86acdc"></div>
<div class="a" style="left:15px;top:455px;width:158px;height:1px;background:#c4c4c4"></div>
<div class="a" style="left:2px;top:455px;width:13px;height:1px;background:#86acdc"></div>
<div class="a" style="left:15px;top:531px;width:158px;height:1px;background:#c4c4c4"></div>
<div class="a" style="left:2px;top:531px;width:13px;height:1px;background:#86acdc"></div>
<div class="t" style="left:4.5px;top:270px;font-size:10.5px;color:#2a3a50">Q</div>
<div class="t" style="left:4.5px;top:308px;font-size:10.5px;color:#2a3a50">W</div>
<div class="t" style="left:4.5px;top:347px;font-size:10.5px;color:#2a3a50">E</div>
<div class="t" style="left:4.5px;top:398px;font-size:10.5px;color:#2a3a50">R</div>
<div class="t" style="left:4.5px;top:437px;font-size:10.5px;color:#2a3a50">T</div>
<div class="t" style="left:4.5px;top:488px;font-size:10.5px;color:#2a3a50">A</div>
<div class="t" style="left:4.5px;top:552px;font-size:10.5px;color:#2a3a50">S</div>
<!-- draw -->
<svg style="left:18px;top:253px" width="24" height="24"><path d="M3 5 L13 15" stroke="#555" stroke-width="1.2"/><circle cx="3" cy="5" r="1.6" fill="#cfe0fa" stroke="#6f9ce0" stroke-width="1"/><circle cx="13" cy="15" r="1.6" fill="#cfe0fa" stroke="#6f9ce0" stroke-width="1"/><ellipse cx="13" cy="4.5" rx="3" ry="3.6" fill="#f7ea50" stroke="#9a9030" stroke-width="0.7"/><rect x="11.7" y="8" width="2.6" height="2.6" fill="#777"/></svg>
<svg style="left:43px;top:253px" width="24" height="24"><path d="M4 15 L15 4" stroke="#555" stroke-width="1.2"/><circle cx="4" cy="15" r="1.6" fill="#cfe0fa" stroke="#6f9ce0" stroke-width="1"/><circle cx="15" cy="4" r="1.6" fill="#cfe0fa" stroke="#6f9ce0" stroke-width="1"/></svg>
<svg style="left:67px;top:253px" width="24" height="24"><path d="M2 11 L10 3.5 L18 11" stroke="#444" stroke-width="1.3" fill="none"/><path d="M4 14 L10 8 L16 14" stroke="#7aa6e8" stroke-width="1.2" fill="none"/></svg>
<svg style="left:92px;top:253px" width="24" height="24"><path d="M9 3 V15 M3 9 H15" stroke="#555" stroke-width="1.2"/><circle cx="9" cy="9" r="1.5" fill="#cfe0fa" stroke="#6f9ce0" stroke-width="1"/></svg>
<svg style="left:116px;top:253px" width="24" height="24"><path d="M3 17 C5 9 8 5 10 10 C12 15 15 14 17 4" stroke="#8a7a50" stroke-width="1.2" fill="none"/><circle cx="3" cy="17" r="1.6" fill="#cfe0fa" stroke="#6f9ce0" stroke-width="1"/><circle cx="7" cy="3" r="1.6" fill="#cfe0fa" stroke="#6f9ce0" stroke-width="1"/><circle cx="12" cy="17" r="1.6" fill="#cfe0fa" stroke="#6f9ce0" stroke-width="1"/><circle cx="17" cy="4" r="1.6" fill="#cfe0fa" stroke="#6f9ce0" stroke-width="1"/></svg>
<div class="a" style="left:112px;top:269px;width:0;height:0;border-top:3px solid transparent;border-bottom:3px solid transparent;border-left:3px solid #000"></div>
<svg style="left:141px;top:253px" width="24" height="24"><path d="M1 16 L7 5 L10 13 L13 10" stroke="#333" stroke-width="1.1" fill="none"/><path d="M10 14 L16 5 L18.5 7 L12.5 16 L9.5 17Z" fill="#f0d840" stroke="#7a6a20" stroke-width="0.7"/><path d="M16 5 L17 3.5 L19.5 5.5 L18.5 7Z" fill="#e890a0"/></svg>
<div class="a" style="left:137px;top:269px;width:0;height:0;border-top:3px solid transparent;border-bottom:3px solid transparent;border-left:3px solid #000"></div>
<svg style="left:18px;top:277px" width="24" height="24"><path d="M2 16 C3 8 5 2 8 4 C11 6 10 15 13 16 C16 17 16 10 16 5" stroke="#444" stroke-width="1.2" fill="none"/></svg>
<svg style="left:43px;top:277px" width="24" height="24"><path d="M3 9.5 L14 3 M3 9.5 L13 16" stroke="#555" stroke-width="1.2"/><path d="M4 9.5 H17" stroke="#6f9ce0" stroke-width="1" stroke-dasharray="1.5 1"/><circle cx="3" cy="9.5" r="1.8" fill="#cfe0fa" stroke="#6f9ce0" stroke-width="1"/><circle cx="14" cy="3" r="1.6" fill="#cfe0fa" stroke="#6f9ce0" stroke-width="1"/><circle cx="13" cy="16" r="1.6" fill="#cfe0fa" stroke="#6f9ce0" stroke-width="1"/></svg>
<svg style="left:67px;top:277px" width="24" height="24"><path d="M3 3 V17" stroke="#444" stroke-width="1.3"/><path d="M3 10 H12" stroke="#6f9ce0" stroke-dasharray="1.5 1"/><path d="M16 3 C12 6 12 14 16 17" stroke="#444" stroke-width="1.2" fill="none"/></svg>
<svg style="left:92px;top:277px" width="24" height="24"><path d="M6 4 V14" stroke="#555" stroke-dasharray="1.5 1"/><path d="M2 18 L18 9" stroke="#444" stroke-width="1.2"/><circle cx="6" cy="3" r="1.6" fill="#cfe0fa" stroke="#6f9ce0" stroke-width="1"/><circle cx="12" cy="12.5" r="1.6" fill="#cfe0fa" stroke="#6f9ce0" stroke-width="1"/></svg>
<svg style="left:18px;top:305px" width="24" height="24"><rect x="3" y="4" width="14" height="10" rx="1" fill="#f0f4fc" stroke="#6f9ce0" stroke-width="1.2"/></svg>
<svg style="left:43px;top:305px" width="24" height="24"><path d="M2 15 L7 5 L16 5 L12 9.5 L17 15Z" fill="#f0f4fc" stroke="#6f9ce0" stroke-width="1.2" stroke-linejoin="round"/></svg>
<svg style="left:67px;top:305px" width="24" height="24"><path d="M4 5 L8 1.5 L17 8.5 L10 17 L4 11 L7 8.5Z" fill="#f0f4fc" stroke="#6f9ce0" stroke-width="1.2" stroke-linejoin="round"/></svg>
<svg style="left:92px;top:305px" width="24" height="24"><path d="M6 1.5 L12.5 1.5 L17 6 L17 12.5 L12.5 17 L6 17 L1.5 12.5 L1.5 6Z" fill="#f0f4fc" stroke="#6f9ce0" stroke-width="1.2"/><circle cx="9.3" cy="9.3" r="1.3" fill="#cfe0fa" stroke="#6f9ce0" stroke-width="1"/><circle cx="13" cy="2" r="1.6" fill="#cfe0fa" stroke="#6f9ce0" stroke-width="1"/></svg>
<svg style="left:18px;top:330px" width="24" height="24"><circle cx="9.5" cy="10" r="7" fill="#f2f5fc" stroke="#6f9ce0" stroke-width="1.2"/></svg>
<svg style="left:43px;top:330px" width="24" height="24"><ellipse cx="10" cy="10" rx="8" ry="6" fill="#f2f5fc" stroke="#6f9ce0" stroke-width="1.2"/></svg>
<svg style="left:67px;top:330px" width="24" height="24"><path d="M2 17 C9 16 14 11 15 3" stroke="#8a7a50" stroke-width="1.3" fill="none"/></svg>
<svg style="left:92px;top:330px" width="24" height="24"><path d="M4 5 C14 5 16 14 4 16" stroke="#6a5a40" stroke-width="1.2" fill="none"/><circle cx="4" cy="5" r="1.6" fill="#cfe0fa" stroke="#6f9ce0" stroke-width="1"/><circle cx="13" cy="10.5" r="1.6" fill="#cfe0fa" stroke="#6f9ce0" stroke-width="1"/><circle cx="4" cy="16" r="1.6" fill="#cfe0fa" stroke="#6f9ce0" stroke-width="1"/></svg>
<svg style="left:116px;top:330px" width="24" height="24"><path d="M4 5 C9 5 13 8 15 14" stroke="#555" stroke-width="1.2" fill="none"/><circle cx="4" cy="5" r="1.6" fill="#cfe0fa" stroke="#6f9ce0" stroke-width="1"/><circle cx="4" cy="13" r="1.6" fill="#cfe0fa" stroke="#6f9ce0" stroke-width="1"/><circle cx="15" cy="14" r="1.6" fill="#cfe0fa" stroke="#6f9ce0" stroke-width="1"/></svg>
<svg style="left:141px;top:330px" width="24" height="24"><path d="M2 12 C3 2 17 2 18 12" stroke="#6f9ce0" stroke-width="1.4" fill="none"/><path d="M10 13 V7 M7.5 9.5 L10 6.5 L12.5 9.5" stroke="#111" stroke-width="1.5" fill="none"/><path d="M4 18 C6 12 14 12 16 18" stroke="#888" stroke-dasharray="1 1" fill="none"/></svg>
<svg style="left:18px;top:355px" width="24" height="24"><path d="M3 18 C5 11 10 6 16 4" stroke="#6f9ce0" stroke-width="1.3" fill="none"/><path d="M11 6 L17 4" stroke="#666" stroke-dasharray="1 1"/></svg>
<svg style="left:43px;top:355px" width="24" height="24"><path d="M3 18 C8 14 10 12 15 11" stroke="#6f9ce0" stroke-width="1.3" fill="none"/><path d="M3 17 C5 10 8 5 13 4" stroke="#888" stroke-dasharray="1 1" fill="none"/><path d="M13 3 C18 3 18 9 14 10" stroke="#111" stroke-width="1.3" fill="none"/><path d="M12 9 L15 7 L15 11Z" fill="#111"/></svg>
<svg style="left:18px;top:381px" width="24" height="24"><defs><pattern id="dp" width="4" height="4" patternUnits="userSpaceOnUse"><rect width="4" height="4" fill="#b9d2f4"/><circle cx="2" cy="2" r="0.9" fill="#f4f8fe"/></pattern><pattern id="hp" width="3" height="3" patternUnits="userSpaceOnUse" patternTransform="rotate(45)"><rect width="3" height="3" fill="#cfe0f8"/><rect width="1.2" height="3" fill="#6e9ee0"/></pattern></defs><rect x="2" y="2" width="15" height="17" fill="url(#hp)" stroke="#445" stroke-width="1"/><path d="M12 5 V14 H6" stroke="#222" stroke-width="2" fill="none"/><path d="M13 5 V15 H6" stroke="#fff" stroke-width="0.8" fill="none"/></svg>
<svg style="left:43px;top:381px" width="24" height="24"><circle cx="10" cy="11" r="9" fill="url(#dp)" stroke="#6e9ee0" stroke-width="1"/><path d="M13 5 V14 H6" stroke="#222" stroke-width="2" fill="none"/></svg>
<svg style="left:67px;top:381px" width="24" height="24"><path d="M2 6 L6 2 L15 2 L16 6 L18 10 L18 19 L2 19Z" fill="url(#dp)" stroke="#445" stroke-width="1"/></svg>
<svg style="left:92px;top:381px" width="24" height="24"><path d="M2 2 L18 19" stroke="#4a8ae8" stroke-width="1.5"/><path d="M3 1 L5 5 M1 3 L6 3 M9 8 L12 12 M8 10 L13 10 M14 14 L17 18 M13 16 L18 16" stroke="#3a80e8" stroke-width="1.2"/></svg>
<svg style="left:116px;top:381px" width="24" height="24"><path d="M2 6 L6 2 L12 2 L16 6 L18 10 L18 19 L2 19Z" fill="url(#dp)" stroke="#445" stroke-width="1"/><text x="10" y="14" font-family="Liberation Serif" font-weight="bold" font-size="14" fill="#e020d0">?</text></svg>
<svg style="left:141px;top:381px" width="24" height="24"><path d="M7 4 L9 1.5 L17 1.5 L19 4 L19 7 L7 7Z" fill="#b4cdf0" stroke="#666" stroke-width="0.8"/><path d="M1 17 L3 14 L11 14 L13 17 L13 20 L1 20Z" fill="#b4cdf0" stroke="#666" stroke-width="0.8"/><path d="M15 15 V10 M13 12 L15 9.5 L17 12" stroke="#111" stroke-width="1.4" fill="none"/></svg>
<svg style="left:18px;top:405px" width="24" height="24"><path d="M2 6 L6 2 L12 2 L16 6 L18 10 L18 19 L2 19Z" fill="url(#dp)" stroke="#445" stroke-width="1"/><path d="M5 16 L15 5 L18 8 L8 18 L4 18Z" fill="#f0d840" stroke="#333" stroke-width="0.8"/><path d="M15 5 L16.5 3.5 L19.5 6.5 L18 8Z" fill="#e890a0"/></svg>
<svg style="left:43px;top:405px" width="24" height="24"><path d="M2 6 L6 2 L14 2 L16 6 L18 10 L18 19 L2 19Z" fill="url(#dp)" stroke="#445" stroke-width="1"/><path d="M2 8 L15 19 M14 8 L3 19" stroke="#d82020" stroke-width="1.8"/></svg>
<svg style="left:18px;top:433px" width="24" height="24"><rect x="1" y="1" width="5" height="17" rx="1" fill="#888" stroke="#333" stroke-width="0.8"/><path d="M1 4 H6 M1 7 H6 M1 10 H6 M1 13 H6" stroke="#ddd" stroke-width="0.8"/><path d="M7 10 L11 7 L15 10.5 L11 15Z" fill="#fff" stroke="#6e9ee0" stroke-width="1.1"/><path d="M6 9 L10 5 L17 12 L11 18Z" fill="none" stroke="#6e9ee0" stroke-width="1.1"/></svg>
<svg style="left:43px;top:433px" width="24" height="24"><path d="M1 8 C2 4 5 3 8 3" stroke="#333" stroke-width="1" fill="none"/><path d="M6 1 L9 3 L6 5Z" fill="#111"/><path d="M9 6 L14 1 L19 6 L14 11Z" fill="#dbe8fb" stroke="#4a7ad8" stroke-width="1.1"/><path d="M2 14 L7 9 L12 14 L7 19Z" fill="#fff" stroke="#555" stroke-width="1.1"/></svg>
<svg style="left:67px;top:433px" width="24" height="24"><path d="M2 13 L7 8 L12 13 L7 18Z" fill="#fff" stroke="#6e9ee0" stroke-width="1.1"/><text x="11" y="11" font-family="Liberation Serif" font-weight="bold" font-size="12" fill="#e020d0">?</text></svg>
<svg style="left:92px;top:433px" width="24" height="24"><path d="M1 8 C2 4 5 3 8 3" stroke="#333" stroke-width="1" fill="none"/><path d="M6 1 L9 3 L6 5Z" fill="#111"/><path d="M10 6 L15 1 L20 6 L15 11Z" fill="#dbe8fb" stroke="#4a7ad8" stroke-width="1.1"/><path d="M11 14 L15 11 L19 14 L15 17Z" fill="#e8a840"/><path d="M11 17 L15 14 L19 17 L15 20Z" fill="#9cc0f0"/><path d="M2 14 L7 9 L12 14 L7 19Z" fill="#fff" stroke="#555" stroke-width="1.1"/></svg>
<svg style="left:116px;top:433px" width="24" height="24"><rect x="1" y="1" width="5" height="17" rx="1" fill="#888" stroke="#333" stroke-width="0.8"/><path d="M1 4 H6 M1 7 H6 M1 10 H6 M1 13 H6" stroke="#ddd" stroke-width="0.8"/><path d="M8 13 L13 8 L18 13 L13 18Z" fill="#fff" stroke="#6e9ee0" stroke-width="1.1"/><path d="M7 5 L18 18 M17 6 L7 17" stroke="#d82020" stroke-width="1.6"/></svg>
<svg style="left:18px;top:459px" width="24" height="24"><text x="1" y="18" font-family="Liberation Serif" font-weight="bold" font-size="19" fill="#b8282a">A</text></svg>
<svg style="left:43px;top:459px" width="24" height="24"><path d="M4 17 L11 10" stroke="#b8282a" stroke-width="1.6"/><path d="M3 12 L3 18 L9 18" stroke="#b8282a" stroke-width="1.6" fill="none"/><text x="10" y="12" font-family="Liberation Serif" font-weight="bold" font-size="11" fill="#b8282a">A</text></svg>
<svg style="left:67px;top:459px" width="24" height="24"><text x="3" y="19" font-family="Liberation Serif" font-weight="bold" font-size="10" fill="#b8282a">A</text><text x="9" y="9" font-family="Liberation Serif" font-weight="bold" font-size="10" fill="#3a7ae0">B</text><path d="M11 18 C13 17 14 15 13 13" stroke="#111" stroke-width="1.2" fill="none"/><path d="M11 13 L13 11 L15 13Z" fill="#111"/></svg>
<svg style="left:92px;top:459px" width="24" height="24"><text x="0" y="10" font-family="Liberation Serif" font-weight="bold" font-size="10" fill="#b8282a">ABC</text><path d="M6 13 L9 17 L15 11" stroke="#444" stroke-width="2" fill="none"/></svg>
<svg style="left:116px;top:459px" width="24" height="24"><text x="7" y="9" font-family="Liberation Serif" font-weight="bold" font-size="10" fill="#c030d0">?</text><text x="1" y="19" font-family="Liberation Serif" font-weight="bold" font-size="9.5" fill="#b8282a">ABC</text></svg>
<svg style="left:141px;top:459px" width="24" height="24"><text x="7" y="9" font-family="Liberation Serif" font-weight="bold" font-size="10" fill="#b8282a">A</text><text x="1" y="19" font-family="Liberation Serif" font-weight="bold" font-size="10" fill="#b8282a">A</text><path d="M10 18 C12 17 13 15 12 13" stroke="#111" stroke-width="1.2" fill="none"/><path d="M10 13 L12 11 L14 13Z" fill="#111"/></svg>
<svg style="left:18px;top:484px" width="24" height="24"><text x="8" y="10" font-family="Liberation Serif" font-weight="normal" font-size="11" fill="#5a8ae0">A</text><text x="1" y="20" font-family="Liberation Serif" font-weight="bold" font-size="10" fill="#b8282a">A</text><path d="M10 19 C12 18 13 16 12 14" stroke="#111" stroke-width="1.2" fill="none"/><path d="M10 14 L12 12 L14 14Z" fill="#111"/></svg>
<svg style="left:43px;top:484px" width="24" height="24"><text x="4" y="9" font-family="Liberation Serif" font-weight="bold" font-size="9" fill="#b8282a">I</text><path d="M9 10 V19 M4.5 14.5 H13.5" stroke="#b8282a" stroke-width="1.2"/><circle cx="9" cy="14.5" r="2" fill="none" stroke="#b8282a"/></svg>
<svg style="left:67px;top:484px" width="24" height="24"><text x="0" y="9" font-family="Liberation Serif" font-weight="bold" font-size="8" fill="#b8282a">A1A</text><text x="4" y="19" font-family="Liberation Serif" font-weight="bold" font-size="8" fill="#b8282a">A2A</text></svg>
<svg style="left:92px;top:484px" width="24" height="24"><text x="1" y="9" font-family="Liberation Serif" font-weight="bold" font-size="8.5" fill="#b8282a">A1</text><text x="8" y="19" font-family="Liberation Serif" font-weight="bold" font-size="9" fill="#3a7ae0">Å1</text><path d="M1 11 H12" stroke="#3a7ae0" stroke-dasharray="1.5 1"/></svg>
<svg style="left:116px;top:484px" width="24" height="24"><text x="1" y="9" font-family="Liberation Serif" font-weight="bold" font-size="8.5" fill="#b8282a">A1</text><text x="8" y="19" font-family="Liberation Serif" font-weight="bold" font-size="9" fill="#3a7ae0">Å2</text><path d="M1 11 H12" stroke="#3a7ae0" stroke-dasharray="1.5 1"/></svg>
<svg style="left:141px;top:484px" width="24" height="24"><rect x="1" y="5" width="15" height="12" fill="#f4f0f0" stroke="#555" stroke-dasharray="1.2 0.8"/><text x="1.5" y="14" font-family="Liberation Serif" font-weight="bold" font-size="7.5" fill="#b8282a">ABC</text></svg>
<svg style="left:18px;top:508px" width="24" height="24"><path d="M1 3 H15 M1 9 H15" stroke="#333" stroke-dasharray="1.5 1"/><path d="M2 6 H14" stroke="#5a8ae0" stroke-width="2" stroke-dasharray="2 2"/><path d="M3 12 H13" stroke="#555" stroke-width="2" stroke-dasharray="2 2"/><path d="M3 17 H14" stroke="#222" stroke-dasharray="2 2"/></svg>
<svg style="left:18px;top:535px" width="24" height="24"><path d="M1 9.5 H17 M9 1.5 V17.5 M3.4000000000000004 3.9000000000000004 L14.6 15.1 M14.6 3.9000000000000004 L3.4000000000000004 15.1" stroke="#4a8ae8" stroke-width="1"/><circle cx="9" cy="9.5" r="3.6" fill="#b8d4f8" stroke="#4a8ae8" stroke-width="0.6"/><circle cx="9" cy="9.5" r="1" fill="#223"/></svg>
<svg style="left:43px;top:535px" width="24" height="24"><path d="M0.5 5 H9.5 M5 0.5 V9.5 M1.85 1.85 L8.15 8.15 M8.15 1.85 L1.85 8.15" stroke="#999" stroke-width="1"/><circle cx="5" cy="5" r="2.025" fill="#ccc" stroke="#999" stroke-width="0.6"/><path d="M8.5 5 H17.5 M13 0.5 V9.5 M9.85 1.85 L16.15 8.15 M16.15 1.85 L9.85 8.15" stroke="#999" stroke-width="1"/><circle cx="13" cy="5" r="2.025" fill="#ccc" stroke="#999" stroke-width="0.6"/><path d="M0.5 13 H9.5 M5 8.5 V17.5 M1.85 9.85 L8.15 16.15 M8.15 9.85 L1.85 16.15" stroke="#4a8ae8" stroke-width="1"/><circle cx="5" cy="13" r="2.025" fill="#b8d4f8" stroke="#4a8ae8" stroke-width="0.6"/><path d="M8.5 13 H17.5 M13 8.5 V17.5 M9.85 9.85 L16.15 16.15 M16.15 9.85 L9.85 16.15" stroke="#999" stroke-width="1"/><circle cx="13" cy="13" r="2.025" fill="#ccc" stroke="#999" stroke-width="0.6"/></svg>
<svg style="left:67px;top:535px" width="24" height="24"><path d="M8.5 5 H17.5 M13 0.5 V9.5 M9.85 1.85 L16.15 8.15 M16.15 1.85 L9.85 8.15" stroke="#4a8ae8" stroke-width="1"/><circle cx="13" cy="5" r="2.025" fill="#b8d4f8" stroke="#4a8ae8" stroke-width="0.6"/><path d="M0.5 13 H9.5 M5 8.5 V17.5 M1.85 9.85 L8.15 16.15 M8.15 9.85 L1.85 16.15" stroke="#4a8ae8" stroke-width="1"/><circle cx="5" cy="13" r="2.025" fill="#b8d4f8" stroke="#4a8ae8" stroke-width="0.6"/><path d="M10 18 C13 17 14 15 13 12" stroke="#111" stroke-width="1.2" fill="none"/><path d="M11 12 L13 10 L15 12Z" fill="#111"/></svg>
<svg style="left:92px;top:535px" width="24" height="24"><path d="M0.5 10 H13.5 M7 3.5 V16.5 M2.45 5.45 L11.55 14.55 M11.55 5.45 L2.45 14.55" stroke="#4a8ae8" stroke-width="1"/><circle cx="7" cy="10" r="2.9250000000000003" fill="#b8d4f8" stroke="#4a8ae8" stroke-width="0.6"/><text x="12" y="7" font-family="Liberation Sans" font-weight="bold" font-size="8" fill="#222">0</text></svg>
<svg style="left:116px;top:535px" width="24" height="24"><path d="M0.5 11 H13.5 M7 4.5 V17.5 M2.45 6.45 L11.55 15.55 M11.55 6.45 L2.45 15.55" stroke="#4a8ae8" stroke-width="1"/><circle cx="7" cy="11" r="2.9250000000000003" fill="#b8d4f8" stroke="#4a8ae8" stroke-width="0.6"/><text x="11" y="9" font-family="Liberation Serif" font-weight="bold" font-size="10" fill="#d030c0">?</text></svg>
<svg style="left:141px;top:535px" width="24" height="24"><path d="M3 17 L15 5" stroke="#222" stroke-width="1.5"/><path d="M10 4 L17 2 L15 9Z" fill="#dfeafb" stroke="#4a78c8" stroke-width="1.2"/></svg>
<svg style="left:18px;top:560px" width="24" height="24"><path d="M0 5 H8 M4 1 V9 M1.2000000000000002 2.2 L6.8 7.8 M6.8 2.2 L1.2000000000000002 7.8" stroke="#4a8ae8" stroke-width="1"/><circle cx="4" cy="5" r="1.8" fill="#b8d4f8" stroke="#4a8ae8" stroke-width="0.6"/><path d="M6 5 H14 M10 1 V9 M7.2 2.2 L12.8 7.8 M12.8 2.2 L7.2 7.8" stroke="#4a8ae8" stroke-width="1"/><circle cx="10" cy="5" r="1.8" fill="#b8d4f8" stroke="#4a8ae8" stroke-width="0.6"/><path d="M12 5 H20 M16 1 V9 M13.2 2.2 L18.8 7.8 M18.8 2.2 L13.2 7.8" stroke="#4a8ae8" stroke-width="1"/><circle cx="16" cy="5" r="1.8" fill="#b8d4f8" stroke="#4a8ae8" stroke-width="0.6"/><path d="M2 14 H10 M6 10 V18 M3.2 11.2 L8.8 16.8 M8.8 11.2 L3.2 16.8" stroke="#4a8ae8" stroke-width="1"/><circle cx="6" cy="14" r="1.8" fill="#b8d4f8" stroke="#4a8ae8" stroke-width="0.6"/><path d="M14 12 L12 15 H16Z M14 15 V18" stroke="#111" fill="#111"/></svg>
<svg style="left:43px;top:560px" width="24" height="24"><rect x="1" y="2" width="17" height="17" fill="#ddd" stroke="#333"/><path d="M9.5 2 V19 M1 10.5 H18" stroke="#333" stroke-width="1.5"/><path d="M2 7 H9 M10 7 H17 M2 15 H9 M10 15 H17" stroke="#6a8a90" stroke-width="2"/></svg>
<!-- view -->
<div class="a" style="left:200px;top:90px;width:998px;height:487px;background:linear-gradient(#a3bdd9,#b7cfe7 26px,#bbd3ea);border:1px solid #44576a;border-radius:6px 6px 0 0"></div>
<div class="a" style="left:201px;top:91px;width:996px;height:1px;background:#e2ebf5;border-radius:5px 5px 0 0"></div>
<div class="a" style="left:207px;top:137px;width:983px;height:434px;border:1px solid #8aa4bc;border-top:none"></div>
<div class="a" style="left:1102px;top:99px;width:27px;height:15px;border:1px solid #6f86a4;border-radius:3px;background:linear-gradient(#eef3f9,#d9e4f0 45%,#c2d2e6 55%,#d6e2f0)"></div>
<div class="a" style="left:1111px;top:106px;width:10px;height:4px;border:1px solid #3c4c60;background:#fff;border-radius:1px"></div>
<div class="a" style="left:1131px;top:99px;width:27px;height:15px;border:1px solid #6f86a4;border-radius:3px;background:linear-gradient(#eef3f9,#d9e4f0 45%,#c2d2e6 55%,#d6e2f0)"></div>
<div class="a" style="left:1140px;top:103px;width:9px;height:7px;border:1px solid #3c4c60;background:#fff;border-radius:1px"><div class="a" style="left:1px;top:1px;width:5px;height:3px;background:#3c4c60"></div></div>
<div class="a" style="left:1160px;top:99px;width:28px;height:15px;border:1px solid #6e2a1c;border-radius:3px;background:linear-gradient(#e9a592,#d76a52 45%,#c43d22 55%,#d8664a)"></div>
<svg style="left:1169px;top:102px" width="11" height="10"><path d="M1.5 1.5 L9.5 8.5 M9.5 1.5 L1.5 8.5" stroke="#fff" stroke-width="2.4"/></svg>
<div class="a" style="left:211px;top:98px;width:14px;height:14px;border-radius:3px;background:#dde7f2;border:1px solid #c2d0e0"></div><div class="a" style="left:214px;top:101px;width:8px;height:8px;background:#474747"></div>
<div class="t" style="left:228px;top:102px;font-size:11px;color:#1c2736;letter-spacing:-0.35px">View 1, Default</div>
<div class="a" style="left:208px;top:117px;width:981px;height:21px;background:#f0f0f0"></div>
<svg style="left:211px;top:121px" width="15" height="14"><rect x="0.5" y="0.5" width="10" height="8" fill="#f4f4f4" stroke="#666"/><rect x="5" y="4" width="9" height="9" fill="#e4ecf8" stroke="#5a7ab0"/><rect x="7" y="6" width="5" height="5" fill="#f0d890"/></svg>
<div class="a" style="left:231px;top:126px;width:0;height:0;border-left:3.5px solid transparent;border-right:3.5px solid transparent;border-top:4px solid #000"></div>
<svg style="left:243px;top:120px" width="16" height="17"><ellipse cx="7.5" cy="7" rx="7" ry="6" fill="#6aa6e8" stroke="#3a6ab8" stroke-width="0.8" transform="rotate(-35 7.5 7)"/><ellipse cx="7" cy="7" rx="4" ry="2.5" fill="#d8ecfc" transform="rotate(-35 7 7)"/><circle cx="5" cy="9" r="1.4" fill="#2a5ab0"/><path d="M13 14 L17 14 L15 16.5Z" fill="#111"/></svg>
<svg style="left:263px;top:120px" width="15" height="15"><path d="M7.5 0 V15 M0 7.5 H15 M2 2 L13 13 M13 2 L2 13" stroke="#777" stroke-width="1.2"/><circle cx="7.5" cy="7.5" r="4" fill="#bfe8f8" stroke="#5a8aa8" stroke-width="0.7"/></svg>
<div class="a" style="left:283px;top:126px;width:0;height:0;border-left:3.5px solid transparent;border-right:3.5px solid transparent;border-top:4px solid #000"></div>
<div class="sep" style="left:295px;top:120px;height:16px"></div>
<svg style="left:302px;top:119px" width="12" height="16"><path d="M5 0 H7 V6 L9 8 V10 H3 V8 L5 6Z" fill="#a04040"/><rect x="1" y="9" width="10" height="6" fill="#a8c0e8" stroke="#5a7ab0" stroke-width="0.6"/></svg>
<svg style="left:321px;top:120px" width="13" height="15"><circle cx="5.5" cy="5.5" r="4.5" fill="#e4eef8" stroke="#555" stroke-width="1.2"/><circle cx="5.5" cy="5.5" r="1.5" fill="#333"/><path d="M8.5 9 L12 14" stroke="#c88a40" stroke-width="2"/></svg>
<svg style="left:341px;top:120px" width="13" height="15"><circle cx="5.5" cy="5.5" r="4.5" fill="#e4eef8" stroke="#555" stroke-width="1.2"/><path d="M3.5 5.5 H7.5" stroke="#333" stroke-width="1.3"/><path d="M8.5 9 L12 14" stroke="#c88a40" stroke-width="2"/></svg>
<svg style="left:359px;top:121px" width="15" height="13"><rect x="0.5" y="0.5" width="14" height="12" rx="1" fill="#fff" stroke="#666" stroke-width="1.1"/><rect x="1" y="1" width="13" height="2" fill="#c8d8ec"/></svg>
<svg style="left:378px;top:121px" width="15" height="13"><rect x="0.5" y="0.5" width="14" height="12" rx="1" fill="#fff" stroke="#666" stroke-width="1.1"/><path d="M2 10 L5 6 L7 8 L9 4 L13 10Z" fill="#111"/></svg>
<svg style="left:398px;top:121px" width="15" height="13"><rect x="0.5" y="0.5" width="14" height="12" rx="1" fill="#e8f0fa" stroke="#666" stroke-width="1.1"/><path d="M4 9 H11 M8 4 L8 9 L11 6" stroke="#3a6ad0" stroke-width="1" fill="none"/></svg>
<svg style="left:418px;top:120px" width="13" height="14"><path d="M1 13 L10 4 M5 3 H11 V9" stroke="#4a7ad8" stroke-width="2.4" fill="none"/><path d="M1 13 L10 4" stroke="#a8ccf8" stroke-width="0.8"/></svg>
<div class="sep" style="left:436px;top:120px;height:16px"></div>
<svg style="left:441px;top:121px" width="16" height="13"><rect x="0.5" y="0.5" width="14" height="12" rx="1.5" fill="#f4f4f4" stroke="#666" stroke-width="1.1"/><path d="M3 8 C5 4 9 4 12 6" stroke="#555" fill="none"/><path d="M2 7 L5 6 L4 9Z" fill="#111"/></svg>
<svg style="left:461px;top:121px" width="16" height="13"><rect x="0.5" y="0.5" width="14" height="12" rx="1.5" fill="#f4f4f4" stroke="#666" stroke-width="1.1"/><path d="M3 6 C6 4 10 4 12 8" stroke="#555" fill="none"/><path d="M13 7 L10 6 L11 9Z" fill="#111"/></svg>
<div class="sep" style="left:480px;top:120px;height:16px"></div>
<svg style="left:486px;top:120px" width="14" height="15"><rect x="6.5" y="0.5" width="7" height="7" fill="#fff" stroke="#666"/><rect x="0.5" y="7.5" width="7" height="7" fill="#fff" stroke="#666"/><path d="M10 10 L12 12 L10 14" stroke="#111" stroke-width="1.5" fill="none"/></svg>
<svg style="left:505px;top:119px" width="16" height="18"><path d="M2 2 L12 14 M12 2 L2 14" stroke="#3a6ad0" stroke-width="2"/><circle cx="7" cy="5" r="3.5" fill="#a8c8f4" stroke="#3a6ad0"/><path d="M12 15 L16 15 L14 17.5Z" fill="#111"/></svg>
<svg style="left:525px;top:120px" width="14" height="15"><rect x="0.5" y="0.5" width="11" height="10" rx="2" fill="#fff" stroke="#4a7ad8" stroke-width="1.4"/><rect x="6" y="7" width="7" height="6" rx="1" fill="#888" stroke="#555" stroke-width="0.6"/></svg>
<!-- map -->
<div class="a" style="left:208px;top:138px;width:981px;height:432px;background:#344f46;overflow:hidden">
<svg style="left:0;top:0" width="981" height="432">
<polyline points="222.0,14.3 223.7,19.0" fill="none" stroke="#0c1812" stroke-width="2.08" stroke-linejoin="round"/>
<polyline points="232.3,19.0 237.8,17.5 242.0,19.0" fill="none" stroke="#0c1812" stroke-width="1.82" stroke-linejoin="round"/>
<polyline points="257.8,5.6 265.9,1.3" fill="none" stroke="#0c1812" stroke-width="1.69" stroke-linejoin="round"/>
<polyline points="293.0,2.3 294.6,13.7" fill="none" stroke="#0c1812" stroke-width="1.69" stroke-linejoin="round"/>
<polyline points="300.0,1.8 301.7,15.3" fill="none" stroke="#0c1812" stroke-width="2.08" stroke-linejoin="round"/>
<polyline points="294.0,10.0 301.0,10.0" fill="none" stroke="#0c1812" stroke-width="1.69" stroke-linejoin="round"/>
<polyline points="307.6,1.8 309.8,19.0" fill="none" stroke="#0c1812" stroke-width="1.95" stroke-linejoin="round"/>
<polyline points="317.4,1.8 320.0,19.0" fill="none" stroke="#0c1812" stroke-width="1.69" stroke-linejoin="round"/>
<polyline points="361.0,1.0 363.0,18.0" fill="none" stroke="#0c1812" stroke-width="1.69" stroke-linejoin="round"/>
<polyline points="363.0,16.0 412.5,9.8 411.6,1.0" fill="none" stroke="#0c1812" stroke-width="1.69" stroke-linejoin="round"/>
<polyline points="379.5,15.0 380.0,19.0" fill="none" stroke="#0c1812" stroke-width="1.69" stroke-linejoin="round"/>
<polyline points="435.5,1.0 438.0,19.0" fill="none" stroke="#0c1812" stroke-width="1.69" stroke-linejoin="round"/>
<polyline points="438.0,11.6 498.8,3.3" fill="none" stroke="#0c1812" stroke-width="1.69" stroke-linejoin="round"/>
<polyline points="443.0,1.0 443.0,10.0" fill="none" stroke="#0c1812" stroke-width="1.69" stroke-linejoin="round"/>
<polyline points="498.7,0.0 500.3,19.0" fill="none" stroke="#0c1812" stroke-width="1.69" stroke-linejoin="round"/>
<polyline points="492.0,4.0 498.0,3.0" fill="none" stroke="#0c1812" stroke-width="1.69" stroke-linejoin="round"/>
<polyline points="506.5,2.1 533.5,0.6" fill="none" stroke="#0c1812" stroke-width="1.69" stroke-linejoin="round"/>
<polyline points="508.1,19.0 508.1,11.5 564.1,5.8 566.2,24.5 515.0,29.1" fill="none" stroke="#0c1812" stroke-width="1.69" stroke-linejoin="round"/>
<polyline points="515.0,38.0 567.7,33.3 569.3,50.9 515.0,57.6" fill="none" stroke="#0c1812" stroke-width="1.69" stroke-linejoin="round"/>
<polyline points="562.5,0.6 689.1,29.4 686.7,68.0 684.4,97.7" fill="none" stroke="#0c1812" stroke-width="2.08" stroke-linejoin="round"/>
<polyline points="579.4,5.0 585.0,75.0" fill="none" stroke="#0c1812" stroke-width="1.95" stroke-linejoin="round"/>
<polyline points="585.9,7.5 588.9,37.0 591.8,53.8 593.6,75.0" fill="none" stroke="#0c1812" stroke-width="1.56" stroke-linejoin="round"/>
<polyline points="600.7,11.0 596.0,32.4 589.5,37.0" fill="none" stroke="#0c1812" stroke-width="1.69" stroke-linejoin="round"/>
<polyline points="615.6,13.4 609.0,53.8 607.2,72.7" fill="none" stroke="#0c1812" stroke-width="2.08" stroke-linejoin="round"/>
<polyline points="590.6,52.6 609.0,54.3 652.9,59.7 686.1,65.0" fill="none" stroke="#0c1812" stroke-width="2.60" stroke-linejoin="round"/>
<polyline points="671.3,27.0 670.7,39.0 657.7,39.0 655.3,59.7 653.5,69.2 654.7,71.6 651.1,79.9 644.6,82.2 623.3,83.4" fill="none" stroke="#0c1812" stroke-width="1.69" stroke-linejoin="round"/>
<polyline points="592.4,55.5 594.2,68.0 595.4,72.7 606.0,72.1 606.0,68.0" fill="none" stroke="#0c1812" stroke-width="1.69" stroke-linejoin="round"/>
<polyline points="611.4,69.8 624.4,70.4 649.4,68.0 650.0,60.9" fill="none" stroke="#0c1812" stroke-width="1.69" stroke-linejoin="round"/>
<polyline points="625.6,59.7 623.9,70.4" fill="none" stroke="#0c1812" stroke-width="1.69" stroke-linejoin="round"/>
<polyline points="596.0,98.2 681.4,115.4" fill="none" stroke="#0c1812" stroke-width="2.60" stroke-linejoin="round"/>
<polyline points="682.0,114.3 679.0,142.0 661.2,222.0 649.4,296.0 636.9,356.4 622.7,431.7" fill="none" stroke="#0c1812" stroke-width="2.34" stroke-linejoin="round"/>
<polyline points="590.0,93.5 593.6,148.0 595.4,162.0 597.8,174.0" fill="none" stroke="#0c1812" stroke-width="1.56" stroke-linejoin="round"/>
<polyline points="595.0,94.0 600.1,142.0 604.9,172.2" fill="none" stroke="#0c1812" stroke-width="1.56" stroke-linejoin="round"/>
<polyline points="600.0,98.0 598.0,122.0" fill="none" stroke="#0c1812" stroke-width="1.30" stroke-linejoin="round"/>
<polyline points="600.0,141.5 611.4,142.7 611.4,143.2 606.0,171.7" fill="none" stroke="#0c1812" stroke-width="1.69" stroke-linejoin="round"/>
<polyline points="630.4,153.3 672.5,161.0" fill="none" stroke="#0c1812" stroke-width="1.95" stroke-linejoin="round"/>
<polyline points="605.5,172.8 669.5,185.9" fill="none" stroke="#0c1812" stroke-width="2.60" stroke-linejoin="round"/>
<polyline points="606.0,174.6 615.0,176.4 613.2,185.9 606.0,184.0" fill="none" stroke="#0c1812" stroke-width="1.69" stroke-linejoin="round"/>
<polyline points="605.5,173.4 601.3,222.0 598.4,279.5 632.2,282.4" fill="none" stroke="#0c1812" stroke-width="1.82" stroke-linejoin="round"/>
<polyline points="599.5,176.4 600.0,204.9" fill="none" stroke="#0c1812" stroke-width="1.56" stroke-linejoin="round"/>
<polyline points="644.6,182.3 641.6,216.0 633.3,282.4" fill="none" stroke="#0c1812" stroke-width="1.69" stroke-linejoin="round"/>
<polyline points="647.6,183.0 644.6,197.8" fill="none" stroke="#0c1812" stroke-width="1.69" stroke-linejoin="round"/>
<polyline points="645.2,197.2 664.2,200.1" fill="none" stroke="#0c1812" stroke-width="1.95" stroke-linejoin="round"/>
<polyline points="628.6,200.1 641.6,202.5" fill="none" stroke="#0c1812" stroke-width="2.34" stroke-linejoin="round"/>
<polyline points="627.4,210.2 639.9,212.6" fill="none" stroke="#0c1812" stroke-width="2.34" stroke-linejoin="round"/>
<polyline points="581.2,142.0 581.7,159.8" fill="none" stroke="#0c1812" stroke-width="1.69" stroke-linejoin="round"/>
<polyline points="580.0,168.7 585.3,168.7 585.3,176.4 580.0,176.4" fill="none" stroke="#0c1812" stroke-width="1.69" stroke-linejoin="round"/>
<polyline points="580.0,180.6 586.5,180.6 588.3,196.0 580.0,196.0" fill="none" stroke="#0c1812" stroke-width="1.69" stroke-linejoin="round"/>
<polyline points="580.0,204.9 588.9,206.6" fill="none" stroke="#0c1812" stroke-width="1.69" stroke-linejoin="round"/>
<polyline points="585.3,180.6 591.2,222.0 590.6,222.0 585.3,277.7 580.0,277.0" fill="none" stroke="#0c1812" stroke-width="1.69" stroke-linejoin="round"/>
<polyline points="619.7,229.6 638.7,230.8" fill="none" stroke="#0c1812" stroke-width="2.34" stroke-linejoin="round"/>
<polyline points="618.5,250.4 612.6,280.6" fill="none" stroke="#0c1812" stroke-width="2.08" stroke-linejoin="round"/>
<polyline points="600.1,254.0 606.0,255.7" fill="none" stroke="#0c1812" stroke-width="1.82" stroke-linejoin="round"/>
<polyline points="636.3,270.0 651.7,271.8" fill="none" stroke="#0c1812" stroke-width="1.95" stroke-linejoin="round"/>
<polyline points="634.5,283.0 638.7,281.2 641.0,284.2 650.5,284.8" fill="none" stroke="#0c1812" stroke-width="1.69" stroke-linejoin="round"/>
<polyline points="580.0,284.8 650.5,291.9" fill="none" stroke="#0c1812" stroke-width="1.82" stroke-linejoin="round"/>
<polyline points="588.9,286.0 588.9,290.0 580.6,343.4" fill="none" stroke="#0c1812" stroke-width="1.82" stroke-linejoin="round"/>
<polyline points="601.3,288.4 601.3,297.1" fill="none" stroke="#0c1812" stroke-width="2.34" stroke-linejoin="round"/>
<polyline points="618.5,290.0 650.5,291.8" fill="none" stroke="#0c1812" stroke-width="1.69" stroke-linejoin="round"/>
<polyline points="580.0,344.6 636.3,355.2" fill="none" stroke="#0c1812" stroke-width="1.69" stroke-linejoin="round"/>
<polyline points="580.0,347.0 637.5,358.2" fill="none" stroke="#0c1812" stroke-width="1.30" stroke-linejoin="round"/>
<polyline points="586.5,322.6 600.7,326.2 604.9,319.1 623.9,321.4" fill="none" stroke="#0c1812" stroke-width="1.95" stroke-linejoin="round"/>
<polyline points="587.7,312.0 595.4,312.0 595.4,318.5 587.7,318.5" fill="none" stroke="#0c1812" stroke-width="1.69" stroke-linejoin="round"/>
<polyline points="603.1,354.0 602.5,357.0 591.8,385.5 584.1,381.3" fill="none" stroke="#0c1812" stroke-width="1.95" stroke-linejoin="round"/>
<polyline points="617.3,357.0 623.3,358.2" fill="none" stroke="#0c1812" stroke-width="1.69" stroke-linejoin="round"/>
<polyline points="580.0,390.2 622.7,422.2" fill="none" stroke="#0c1812" stroke-width="1.30" stroke-linejoin="round"/>
<polyline points="580.0,392.5 622.0,423.0" fill="none" stroke="#0c1812" stroke-width="1.30" stroke-linejoin="round"/>
<polyline points="618.5,396.1 628.0,398.5" fill="none" stroke="#0c1812" stroke-width="2.08" stroke-linejoin="round"/>
<polyline points="580.0,421.0 599.0,431.1" fill="none" stroke="#0c1812" stroke-width="1.95" stroke-linejoin="round"/>
<polyline points="236.7,292.0 212.9,287.4 197.4,292.5 194.3,330.9 236.7,337.1" fill="none" stroke="#0c1812" stroke-width="1.95" stroke-linejoin="round"/>
<polyline points="216.6,0.0 221.5,12.6 243.7,18.6" fill="none" stroke="#9a3cb6" stroke-width="1.7" stroke-linejoin="round"/>
<polyline points="229.6,1.3 311.4,18.6" fill="none" stroke="#9a3cb6" stroke-width="1.7" stroke-linejoin="round"/>
<polyline points="515.0,62.8 522.0,62.2" fill="none" stroke="#9a3cb6" stroke-width="1.7" stroke-linejoin="round"/>
<polyline points="532.5,62.8 570.8,60.2 571.4,64.4" fill="none" stroke="#9a3cb6" stroke-width="1.7" stroke-linejoin="round"/>
<polyline points="580.0,76.3 686.7,98.2 683.2,113.0 580.0,90.5" fill="none" stroke="#9a3cb6" stroke-width="1.9" stroke-linejoin="round"/>
<rect x="536.5" y="18.0" width="1" height="1" fill="#2f9a3a"/>
<rect x="522.3" y="34.5" width="1" height="1" fill="#2f9a3a"/>
<rect x="540.0" y="44.5" width="1" height="1" fill="#2f9a3a"/>
<rect x="591.9" y="20.5" width="1" height="1" fill="#2f9a3a"/>
<rect x="602.5" y="32.5" width="1" height="1" fill="#2f9a3a"/>
<rect x="636.5" y="37.5" width="1" height="1" fill="#2f9a3a"/>
<rect x="672.1" y="46.9" width="1" height="1" fill="#2f9a3a"/>
<rect x="600.1" y="61.2" width="1" height="1" fill="#2f9a3a"/>
<rect x="616.5" y="63.5" width="1" height="1" fill="#2f9a3a"/>
<rect x="634.9" y="64.5" width="1" height="1" fill="#2f9a3a"/>
<rect x="598.5" y="69.5" width="1" height="1" fill="#2f9a3a"/>
<rect x="641.5" y="83.5" width="1" height="1" fill="#2f9a3a"/>
<rect x="662.5" y="87.5" width="1" height="1" fill="#2f9a3a"/>
<rect x="645.5" y="137.5" width="1" height="1" fill="#2f9a3a"/>
<rect x="599.5" y="153.5" width="1" height="1" fill="#2f9a3a"/>
<rect x="616.5" y="142.5" width="1" height="1" fill="#2f9a3a"/>
<rect x="654.5" y="191.5" width="1" height="1" fill="#2f9a3a"/>
<rect x="620.5" y="250.5" width="1" height="1" fill="#2f9a3a"/>
<rect x="635.5" y="278.5" width="1" height="1" fill="#2f9a3a"/>
<rect x="590.5" y="312.5" width="1" height="1" fill="#2f9a3a"/>
<rect x="601.5" y="373.5" width="1" height="1" fill="#2f9a3a"/>
<rect x="587.5" y="409.5" width="1" height="1" fill="#2f9a3a"/>
<rect x="359.5" y="6.5" width="1" height="1" fill="#2f9a3a"/>
</svg></div>
<!-- bottom -->
<div class="a" style="left:0;top:577px;width:1200px;height:31px;background:#f0f0f0"></div>
<div class="a" style="left:0;top:579px;width:367px;height:29px;background:linear-gradient(#fcfcfc,#f2f2f2 50%,#e4e4e4);border-radius:0 4px 4px 0;box-shadow:1px 1px 0 #cfcfcf"></div>
<div class="a" style="left:369px;top:579px;width:418px;height:29px;background:linear-gradient(#fcfcfc,#f2f2f2 50%,#e4e4e4)"></div>
<svg style="left:5px;top:584px" width="18" height="18"><circle cx="8.5" cy="8.5" r="8.5" fill="#a8a8a8"/><path d="M13 8.5 H5 M8 5 L4.5 8.5 L8 12" stroke="#fff" stroke-width="1.8" fill="none"/></svg>
<div class="a" style="left:30px;top:591px;width:0;height:0;border-left:3.5px solid transparent;border-right:3.5px solid transparent;border-top:4px solid #555"></div>
<svg style="left:43px;top:584px" width="18" height="18"><circle cx="8.5" cy="8.5" r="8.5" fill="#a8a8a8"/><path d="M4 8.5 H12 M9 5 L12.5 8.5 L9 12" stroke="#fff" stroke-width="1.8" fill="none"/></svg>
<div class="a" style="left:68px;top:591px;width:0;height:0;border-left:3.5px solid transparent;border-right:3.5px solid transparent;border-top:4px solid #555"></div>
<svg style="left:80px;top:582px" width="20" height="22"><ellipse cx="10" cy="16" rx="9" ry="4.5" fill="#e4e4e4" stroke="#ccc"/><path d="M6 1 L9 15 L15 12" stroke="#b0b0b0" stroke-width="1.6" fill="none"/></svg>
<div class="a" style="left:106px;top:591px;width:0;height:0;border-left:3.5px solid transparent;border-right:3.5px solid transparent;border-top:4px solid #555"></div>
<div class="a" style="left:117px;top:584px;width:112px;height:17px;border:1px solid #9a9a9a;border-radius:3px;background:linear-gradient(#f6f6f6,#e8e8e8)"></div>
<svg style="left:119px;top:586px" width="14" height="12"><rect x="1" y="1" width="8" height="6" fill="#f8f8f8" stroke="#666" stroke-width="0.8"/><rect x="4" y="4" width="9" height="7" fill="#fff" stroke="#666" stroke-width="0.8"/></svg>
<div class="t" style="left:138px;top:588px;font-size:10px;color:#333;-webkit-text-stroke:0.2px #333;letter-spacing:-0.38px">Default Views</div>
<div class="a" style="left:218px;top:591px;width:0;height:0;border-left:3.5px solid transparent;border-right:3.5px solid transparent;border-top:4px solid #000"></div>
<div class="sep" style="left:232px;top:582px;height:22px"></div>
<svg style="left:238px;top:584px" width="20" height="17"><rect x="1" y="1" width="10" height="8" fill="#e8eef8" stroke="#555"/><rect x="6" y="5" width="12" height="10" fill="#fff" stroke="#555"/><rect x="6" y="5" width="12" height="2" fill="#5a8ad8"/></svg>
<div class="sep" style="left:262px;top:582px;height:22px"></div>
<div class="a" style="left:266px;top:584px;width:12px;height:17px;background:linear-gradient(#f8d890,#f2b850);border-right:2px solid #555"></div>
<div class="a" style="left:278px;top:584px;width:12px;height:17px;background:linear-gradient(#fafafa,#e8e8e8);border-right:2px solid #555"></div>
<div class="a" style="left:290px;top:584px;width:12px;height:17px;background:linear-gradient(#fafafa,#e8e8e8);border-right:2px solid #555"></div>
<div class="a" style="left:302px;top:584px;width:12px;height:17px;background:linear-gradient(#fafafa,#e8e8e8);border-right:2px solid #555"></div>
<div class="a" style="left:315px;top:584px;width:12px;height:17px;background:linear-gradient(#fafafa,#e8e8e8);border-right:2px solid #555"></div>
<div class="a" style="left:327px;top:584px;width:12px;height:17px;background:linear-gradient(#fafafa,#e8e8e8);border-right:2px solid #555"></div>
<div class="a" style="left:339px;top:584px;width:12px;height:17px;background:linear-gradient(#fafafa,#e8e8e8);border-right:2px solid #555"></div>
<div class="a" style="left:351px;top:584px;width:12px;height:17px;background:linear-gradient(#fafafa,#e8e8e8);border-right:2px solid #555"></div>
<div class="t" style="left:268.5px;top:588px;font-size:10.5px;color:#333">1</div>
<div class="t" style="left:280.5px;top:588px;font-size:10.5px;color:#333">2</div>
<div class="t" style="left:292.5px;top:588px;font-size:10.5px;color:#333">3</div>
<div class="t" style="left:304.5px;top:588px;font-size:10.5px;color:#333">4</div>
<div class="t" style="left:317.5px;top:588px;font-size:10.5px;color:#333">5</div>
<div class="t" style="left:329.5px;top:588px;font-size:10.5px;color:#333">6</div>
<div class="t" style="left:341.5px;top:588px;font-size:10.5px;color:#333">7</div>
<div class="t" style="left:353.5px;top:588px;font-size:10.5px;color:#333">8</div>
<div class="a" style="left:371px;top:586px;width:2px;height:14px;border-left:2px dotted #9a9a9a"></div>
<div class="t" style="left:385px;top:588px;font-size:12px;font-weight:bold;color:#111">X</div>
<div class="a" style="left:400px;top:585px;width:60px;height:16px;background:#fff;border:1px solid #c8c8c8"></div>
<div class="t" style="left:405px;top:589px;font-size:10px;color:#8a8a8a;letter-spacing:-0.1px">581984.8</div>
<div class="a" style="left:0;top:608px;width:1200px;height:23px;background:#f0f0f0;border-top:1px solid #e0e0e0"></div>
<div class="t" style="left:-1px;top:616px;font-size:10px;color:#333;-webkit-text-stroke:0.2px #333;letter-spacing:-0.33px">Element Selection &gt; Identify element to add to set</div>
<div class="a" style="left:345px;top:609px;width:2px;height:22px;border-left:1px solid #c8c8c8;border-right:1px solid #fff"></div>
<div class="a" style="left:349px;top:610px;width:22px;height:20px;border:1px solid #e2e2e2;border-right:1px solid #d0d0d0"></div>
<div class="t" style="left:372px;top:616px;font-size:10px;color:#333;-webkit-text-stroke:0.2px #333;letter-spacing:-0.17px">BIENTAP loaded.</div>
<div class="a" style="left:806px;top:609px;width:2px;height:22px;border-left:1px solid #c8c8c8;border-right:1px solid #fff"></div>
<div class="a" style="left:831px;top:609px;width:2px;height:22px;border-left:1px solid #c8c8c8;border-right:1px solid #fff"></div>
<div class="a" style="left:855px;top:609px;width:2px;height:22px;border-left:1px solid #c8c8c8;border-right:1px solid #fff"></div>
<div class="a" style="left:957px;top:609px;width:2px;height:22px;border-left:1px solid #c8c8c8;border-right:1px solid #fff"></div>
<div class="a" style="left:1049px;top:609px;width:2px;height:22px;border-left:1px solid #c8c8c8;border-right:1px solid #fff"></div>
<div class="a" style="left:1074px;top:609px;width:2px;height:22px;border-left:1px solid #c8c8c8;border-right:1px solid #fff"></div>
<div class="a" style="left:1098px;top:609px;width:2px;height:22px;border-left:1px solid #c8c8c8;border-right:1px solid #fff"></div>
<div class="a" style="left:1123px;top:609px;width:2px;height:22px;border-left:1px solid #c8c8c8;border-right:1px solid #fff"></div>
<div class="a" style="left:1147px;top:609px;width:2px;height:22px;border-left:1px solid #c8c8c8;border-right:1px solid #fff"></div>
<div class="a" style="left:1172px;top:609px;width:2px;height:22px;border-left:1px solid #c8c8c8;border-right:1px solid #fff"></div>
<svg style="left:811px;top:612px" width="14" height="14"><path d="M2 9 Q3 12 7 11 L10 10 L11 3" stroke="#5a7ac8" stroke-width="1.5" fill="none"/><circle cx="11" cy="3" r="1.5" fill="#5a7ac8"/><circle cx="2" cy="10" r="1.5" fill="#5a7ac8"/></svg>
<svg style="left:836px;top:612px" width="14" height="13"><path d="M3.5 6 V3.5 A3.5 3.5 0 0 1 10.5 3.5 V6" stroke="#776030" stroke-width="1.2" fill="none"/><rect x="2" y="6" width="10" height="6" fill="#c8b040" stroke="#776030" stroke-width="0.6"/></svg>
<div class="t" style="left:858px;top:616px;font-size:10px;color:#222;letter-spacing:-0.1px">Level 12</div>
<svg style="left:1128px;top:612px" width="13" height="14"><path d="M2 2 C5 0 8 4 11 2 V12 C8 14 5 10 2 12Z" fill="#fff" stroke="#666" stroke-width="0.8"/></svg>
<svg style="left:1151px;top:611px" width="17" height="15"><path d="M1 8 L8.5 1 L16 8" stroke="#e88a20" stroke-width="2.2" fill="none"/><rect x="4" y="8" width="9" height="6" fill="#fff" stroke="#999" stroke-width="0.6"/><rect x="7" y="10" width="3" height="4" fill="#3a5ad0"/></svg>
<div class="a" style="left:0;top:630px;width:1200px;height:1px;background:#d8dcd8"></div>
<div class="a" style="left:0;top:631px;width:1200px;height:3px;background:linear-gradient(90deg,#4a6a5c,#4a6a5c 520px,#5a7890 600px,#5a7890)"></div>
<div class="a" style="left:101px;top:631px;width:53px;height:2px;background:#e8ece8"></div>
<div class="a" style="left:157px;top:631px;width:51px;height:2px;background:#e8ece8"></div>
<div class="a" style="left:266px;top:631px;width:51px;height:2px;background:#e8ece8"></div>
<div class="a" style="left:0;top:634px;width:1200px;height:41px;background:#dbdbdb"></div>
<!-- dialog -->
<div class="a" style="left:268px;top:157px;width:455px;height:87px;border:1px solid #9aa6b4;border-radius:6px 6px 0 0;background:linear-gradient(#dfe8f2,#c9d7e6 26px,#cddbea 60px,#d2dfee)"></div>
<div class="a" style="left:269px;top:158px;width:453px;height:2px;border-radius:5px 5px 0 0;border-top:1px solid #f4f7fb"></div>
<!-- title icon -->
<div class="a" style="left:278px;top:171px;width:6px;height:6px;background:#d94030;border:1px solid #a02818"></div>
<div class="a" style="left:282px;top:167px;width:8px;height:7px;background:#f3cd3c;border:1px solid #c99a10"></div>
<div class="a" style="left:284px;top:174px;width:6px;height:4px;background:#4a7fd0"></div>
<div class="t" style="left:294px;top:169px;font-size:11.5px;color:#3b4756;letter-spacing:-0.74px">VIETMAP XM 2015 (Theo TT 25,28/2014-BTNMT)</div>
<!-- close btn -->
<div class="a" style="left:687px;top:166px;width:28px;height:15px;border:1px solid #8998ab;border-radius:3px;background:linear-gradient(#e9eff6,#d5dfea 50%,#c8d5e3 51%,#d6e1ec)"></div>
<svg style="left:695px;top:168px" width="12" height="11"><path d="M2 2 L10 9 M10 2 L2 9" stroke="#6a7686" stroke-width="3.4" stroke-linecap="round"/><path d="M2 2 L10 9 M10 2 L2 9" stroke="#f4f6f8" stroke-width="1.6" stroke-linecap="round"/></svg>
<!-- client -->
<div class="a" style="left:275px;top:183px;width:442px;height:59px;background:#f0f0f0"></div>
<div class="a" style="left:275px;top:183px;width:442px;height:20px;background:linear-gradient(#fafbfc,#eef0f3)"></div>
<div class="t" style="left:288.5px;top:189px;font-size:11px;letter-spacing:-0.2px;color:#222;-webkit-text-stroke:0.25px #222">Hệ thống</div>
<div class="t" style="left:349px;top:189px;font-size:11px;letter-spacing:-0.35px;color:#222;-webkit-text-stroke:0.25px #222">Biên tập</div>
<div class="t" style="left:403.5px;top:189px;font-size:11px;letter-spacing:-0.35px;color:#222;-webkit-text-stroke:0.25px #222">Bản đồ</div>
<div class="a" style="left:445px;top:185px;width:54px;height:18px;border:1px solid #979797;border-bottom:none;background:#fff"></div>
<div class="t" style="left:452.5px;top:189px;font-size:11px;letter-spacing:-0.35px;color:#222;-webkit-text-stroke:0.25px #222">Kiểm kê</div>
<div class="t" style="left:506.5px;top:189px;font-size:11px;letter-spacing:-0.5px;color:#222;-webkit-text-stroke:0.25px #222">Biên tập BĐHT</div>
<div class="t" style="left:591px;top:189px;font-size:11px;letter-spacing:-0.2px;color:#222;-webkit-text-stroke:0.25px #222">Tiện ích</div>
<div class="t" style="left:645px;top:189px;font-size:11px;letter-spacing:-0.25px;color:#222;-webkit-text-stroke:0.25px #222">Trợ giúp</div>
<!-- toolbar -->
<div class="a" style="left:275px;top:217px;width:170px;height:21px;background:linear-gradient(#fbfbfb,#f2f2f2);border-bottom:1px solid #e3e3e3"></div>
<div class="a" style="left:278px;top:221px;width:1px;height:13px;border-left:1px dotted #8a8a8a"></div>
<svg style="left:285px;top:220px" width="14" height="14"><path d="M7 4 L7 13 M2.5 8.5 L11.5 8.5" stroke="#222" stroke-width="1.3"/><path d="M5 7 L7 1 L9 7 Z" fill="#111"/></svg>
<svg style="left:306px;top:220px" width="12" height="13"><rect x="0.5" y="0.5" width="11" height="12" rx="1" fill="#6a5a5a" stroke="#444" stroke-width="0.6"/><circle cx="3.5" cy="3.7" r="1.8" fill="none" stroke="#f2d0d0" stroke-width="1"/><circle cx="8.5" cy="3.7" r="1.8" fill="none" stroke="#f2d0d0" stroke-width="1"/><circle cx="3.5" cy="9" r="1.8" fill="none" stroke="#f2d0d0" stroke-width="1"/><circle cx="8.5" cy="9" r="1.8" fill="none" stroke="#f2d0d0" stroke-width="1"/></svg>
<div class="a" style="left:326px;top:221px;width:1px;height:14px;background:#c8c8c8"></div>
<svg style="left:331px;top:220px" width="14" height="14"><path d="M7 2 L12 7 L7 12 L2 7Z" fill="none" stroke="#eab0b0" stroke-width="1"/><path d="M7 0 V4 M7 10 V14 M0 7 H4 M10 7 H14" stroke="#e8a0a0" stroke-width="1"/></svg>
<div class="a" style="left:352px;top:220px;width:11px;height:14px;background:linear-gradient(90deg,#e4e8ee,#f8f8f8);border:1px solid #9aa4b4;border-radius:1px"><div class="a" style="left:4px;top:2px;width:5px;height:1px;background:#3a6fc8;box-shadow:0 3px 0 #3a6fc8,0 6px 0 #3a6fc8,0 9px 0 #3a6fc8"></div></div>

<!-- menu -->
<div class="a" style="left:445px;top:201px;width:343px;height:419px;background:#fff;border:1px solid #979797;box-shadow:2px 2px 2px rgba(0,0,0,.28)"></div>
<div class="a" style="left:446px;top:201px;width:52px;height:1px;background:#fff"></div>
<div class="a" style="left:446px;top:202px;width:21px;height:417px;background:linear-gradient(90deg,#f0f0f0,#f4f4f4 85%,#f8f8f8)"></div>
<div class="a" style="left:474px;top:284px;width:311px;height:2px;border-top:1px solid #d7d7d7;border-bottom:1px solid #fff"></div>
<div class="a" style="left:474px;top:386.5px;width:311px;height:2px;border-top:1px solid #d7d7d7;border-bottom:1px solid #fff"></div>
<div class="a" style="left:474px;top:488.5px;width:311px;height:2px;border-top:1px solid #d7d7d7;border-bottom:1px solid #fff"></div>
<div class="a" style="left:474px;top:552px;width:311px;height:2px;border-top:1px solid #d7d7d7;border-bottom:1px solid #fff"></div>
<div class="a" style="left:474px;top:576.5px;width:311px;height:2px;border-top:1px solid #d7d7d7;border-bottom:1px solid #fff"></div>
<div class="t" style="left:477px;top:207.6px;font-size:11px;letter-spacing:-0.25px;color:#2a2a2a;-webkit-text-stroke:0.25px #2a2a2a">Tạo khoanh đất từ bản đồ địa chính</div>
<div class="t" style="left:477px;top:226.7px;font-size:11px;letter-spacing:-0.25px;color:#2a2a2a;-webkit-text-stroke:0.25px #2a2a2a">Tạo topology cho khoanh đất</div>
<div class="t" style="left:477px;top:246.5px;font-size:11px;letter-spacing:-0.25px;color:#2a2a2a;-webkit-text-stroke:0.25px #2a2a2a">Gán thông tin từ cơ sở dữ liệu bản đồ địa chính</div>
<div class="t" style="left:477px;top:265.6px;font-size:11px;letter-spacing:-0.25px;color:#2a2a2a;-webkit-text-stroke:0.25px #2a2a2a">Gộp bản đồ cấp huyện</div>
<div class="t" style="left:477px;top:290.0px;font-size:11px;letter-spacing:-0.25px;color:#2a2a2a;-webkit-text-stroke:0.25px #2a2a2a">Đánh số thứ tự khoanh đất</div>
<div class="t" style="left:477px;top:309.5px;font-size:11px;letter-spacing:-0.25px;color:#2a2a2a;-webkit-text-stroke:0.25px #2a2a2a">Gán thông tin khoanh đất từ nhãn</div>
<div class="t" style="left:477px;top:328.9px;font-size:11px;letter-spacing:-0.25px;color:#2a2a2a;-webkit-text-stroke:0.25px #2a2a2a">Gán thông tin mã khu vực</div>
<div class="t" style="left:477px;top:347.9px;font-size:11px;letter-spacing:-0.25px;color:#2a2a2a;-webkit-text-stroke:0.25px #2a2a2a">Quản lý thông tin khoanh đất</div>
<div class="t" style="left:477px;top:367.1px;font-size:11px;letter-spacing:-0.25px;color:#2a2a2a;-webkit-text-stroke:0.25px #2a2a2a">Chuẩn hóa theo loại đất mới</div>
<div class="t" style="left:477px;top:392.9px;font-size:11px;letter-spacing:-0.25px;color:#2a2a2a;-webkit-text-stroke:0.25px #2a2a2a">Tạo bản đồ điều tra khoanh đất</div>
<div class="t" style="left:477px;top:411.9px;font-size:11px;letter-spacing:-0.25px;color:#2a2a2a;-webkit-text-stroke:0.25px #2a2a2a">Vẽ nhãn thông tin khoanh đất</div>
<div class="t" style="left:477px;top:431.1px;font-size:11px;letter-spacing:-0.25px;color:#2a2a2a;-webkit-text-stroke:0.25px #2a2a2a">Vẽ nhãn kết quả điều tra khoanh đất</div>
<div class="t" style="left:477px;top:450.5px;font-size:11px;letter-spacing:-0.25px;color:#2a2a2a;-webkit-text-stroke:0.25px #2a2a2a">Vẽ nhãn kết quả điều tra khoanh đất từ dữ liệu BĐ địa chính</div>
<div class="t" style="left:477px;top:469.9px;font-size:11px;letter-spacing:-0.25px;color:#2a2a2a;-webkit-text-stroke:0.25px #2a2a2a">Tạo bảng liệt kê danh sách khoanh đất</div>
<div class="t" style="left:477px;top:494.7px;font-size:11px;letter-spacing:-0.25px;color:#2a2a2a;-webkit-text-stroke:0.25px #2a2a2a">Tô màu bản đồ hiện trạng</div>
<div class="t" style="left:477px;top:514.3px;font-size:11px;letter-spacing:-0.25px;color:#2a2a2a;-webkit-text-stroke:0.25px #2a2a2a">Vẽ nhãn loại đất</div>
<div class="t" style="left:477px;top:533.1px;font-size:11px;letter-spacing:-0.25px;color:#2a2a2a;-webkit-text-stroke:0.25px #2a2a2a">Vẽ khung bản đồ hiện trạng</div>
<div class="t" style="left:477px;top:558.5px;font-size:11px;letter-spacing:-0.25px;color:#2a2a2a;-webkit-text-stroke:0.25px #2a2a2a">Xuất biểu kiểm kê đất đai</div>
<div class="t" style="left:477px;top:583.2px;font-size:11px;letter-spacing:-0.25px;color:#2a2a2a;-webkit-text-stroke:0.25px #2a2a2a">Biên tập bản đồ hiện trạng</div>
<div class="t" style="left:477px;top:602.2px;font-size:11px;letter-spacing:-0.25px;color:#2a2a2a;-webkit-text-stroke:0.25px #2a2a2a">Tiện ích kiểm tra</div>
<div class="a" style="left:772px;top:586.5px;width:0;height:0;border-top:3.5px solid transparent;border-bottom:3.5px solid transparent;border-left:4px solid #000"></div>
<div class="a" style="left:772px;top:605.5px;width:0;height:0;border-top:3.5px solid transparent;border-bottom:3.5px solid transparent;border-left:4px solid #000"></div>
<!-- overlay -->
<div class="a" style="left:1198px;top:41px;width:2px;height:590px;background:#fafafa"></div>

</body></html>
